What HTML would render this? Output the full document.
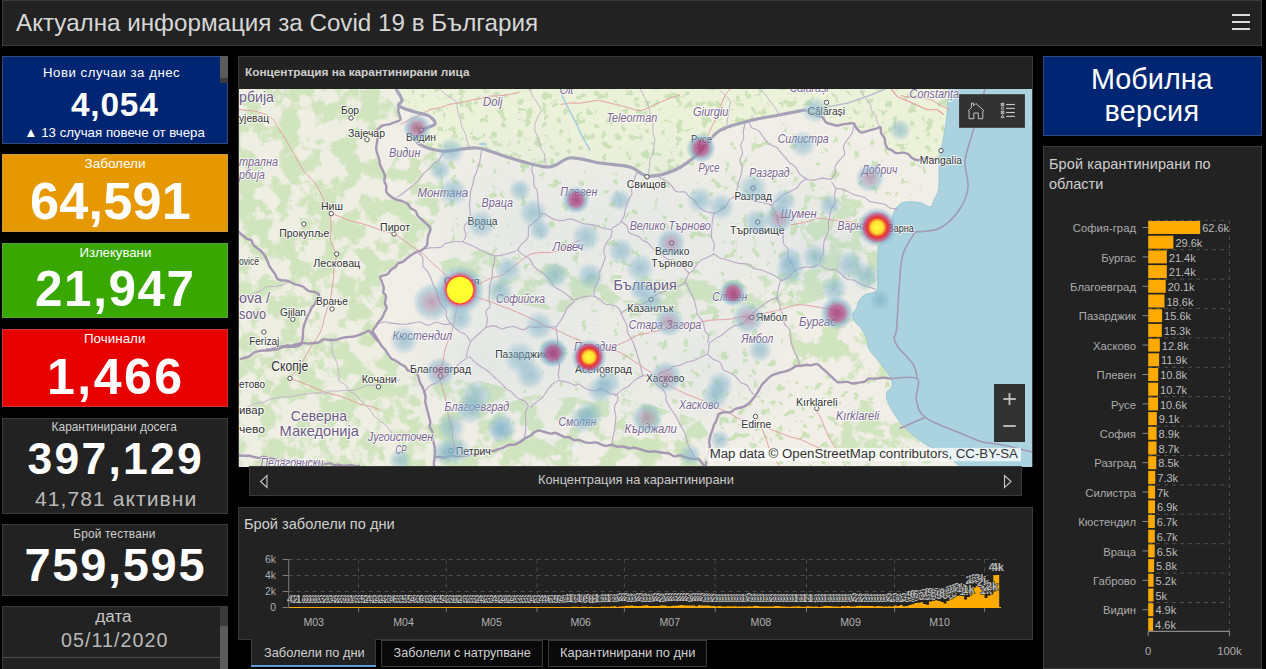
<!DOCTYPE html>
<html><head><meta charset="utf-8">
<style>
*{margin:0;padding:0;box-sizing:border-box}
html,body{width:1266px;height:669px;overflow:hidden;background:#000;font-family:"Liberation Sans",sans-serif}
.a{position:absolute}
.t{position:absolute;white-space:nowrap;line-height:1}
.pnl{position:absolute;background:#222;border:1px solid #3a3a3a}
</style></head><body>
<!-- header -->
<div class="pnl" style="left:2px;top:0;width:1260px;height:46px"></div>
<div class="t" style="left:16px;top:11px;font-size:24.2px;color:#d6d6d6">Актуална информация за Covid 19 в България</div>
<div class="a" style="left:1232px;top:14px;width:18px;height:2px;background:#ddd"></div>
<div class="a" style="left:1232px;top:21px;width:18px;height:2px;background:#ddd"></div>
<div class="a" style="left:1232px;top:28px;width:18px;height:2px;background:#ddd"></div>

<!-- left boxes -->
<div class="a" style="left:2px;top:56px;width:226px;height:88px;background:#002673;box-shadow:inset 0 0 0 1px rgba(140,140,150,0.35)"></div>
<div class="a" style="left:220px;top:56px;width:8px;height:22px;background:#5c5c5c"></div>
<div class="a" style="left:220px;top:78px;width:8px;height:5px;background:#3c3c3c"></div>
<div class="t" style="left:43px;top:65.7px;font-size:13.2px;letter-spacing:0.54px;color:#fff">Нови случаи за днес</div>
<div class="t" style="left:71px;top:88.1px;font-size:33.4px;letter-spacing:0.8px;font-weight:700;color:#fff">4,054</div>
<div class="t" style="left:24.3px;top:126px;font-size:13.3px;color:#fff">▲ 13 случая повече от вчера</div>

<div class="a" style="left:2px;top:154px;width:226px;height:78px;background:#e69800;box-shadow:inset 0 0 0 1px rgba(160,160,160,0.35)"></div>
<div class="t" style="left:84.5px;top:156.5px;font-size:13.5px;color:#fff">Заболели</div>
<div class="t" style="left:30px;top:174.6px;font-size:52.3px;letter-spacing:0.2px;font-weight:700;color:#fff">64,591</div>

<div class="a" style="left:2px;top:243px;width:226px;height:75px;background:#38a800;box-shadow:inset 0 0 0 1px rgba(160,160,160,0.3)"></div>
<div class="t" style="left:79.5px;top:245.5px;font-size:13.2px;color:#fff">Излекувани</div>
<div class="t" style="left:35px;top:264px;font-size:49.4px;letter-spacing:1.6px;font-weight:700;color:#fff">21,947</div>

<div class="a" style="left:2px;top:329px;width:226px;height:78px;background:#e60000;box-shadow:inset 0 0 0 1px rgba(160,160,160,0.3)"></div>
<div class="t" style="left:84px;top:332px;font-size:13.4px;color:#fff">Починали</div>
<div class="t" style="left:47px;top:351.6px;font-size:50px;letter-spacing:2.5px;font-weight:700;color:#fff">1,466</div>

<div class="pnl" style="left:2px;top:418px;width:226px;height:96px"></div>
<div class="t" style="left:51.6px;top:421.5px;font-size:11.9px;color:#cfcfcf">Карантинирани досега</div>
<div class="t" style="left:27.5px;top:436.7px;font-size:44.5px;letter-spacing:2.25px;font-weight:700;color:#fff">397,129</div>
<div class="t" style="left:35px;top:488.4px;font-size:21.1px;letter-spacing:1.05px;color:#b9b9b9">41,781 активни</div>

<div class="pnl" style="left:2px;top:524px;width:226px;height:72px"></div>
<div class="t" style="left:73.2px;top:528.5px;font-size:11.9px;letter-spacing:0.15px;color:#cfcfcf">Брой тествани</div>
<div class="t" style="left:24.5px;top:541.3px;font-size:47px;letter-spacing:1.7px;font-weight:700;color:#fff">759,595</div>

<div class="pnl" style="left:2px;top:606px;width:226px;height:70px"></div>
<div class="a" style="left:3px;top:657px;width:217px;height:1px;background:#4a4a4a"></div>
<div class="a" style="left:220px;top:607px;width:8px;height:20px;background:#3a3a3a"></div>
<div class="a" style="left:220px;top:626px;width:8px;height:43px;background:#5c5c5c"></div>
<div class="t" style="left:95.3px;top:608.2px;font-size:17.1px;color:#c8c8c8">дата</div>
<div class="t" style="left:61px;top:630.5px;font-size:19.7px;letter-spacing:1.04px;color:#b9b9b9">05/11/2020</div>

<!-- map panel -->
<div class="pnl" style="left:238px;top:56px;width:795px;height:411px"></div>
<div class="t" style="left:245px;top:67px;font-size:11.8px;font-weight:700;color:#cfcfcf">Концентрация на карантинирани лица</div>
<div id="map" class="a" style="left:239px;top:89px;width:793px;height:378px;background:#f2efe9;overflow:hidden"><svg width="793" height="378" viewBox="239 89 793 378" style="position:absolute;left:0;top:0">
<defs>
<radialGradient id="hot"><stop offset="0" stop-color="#ffff30"/><stop offset="0.5" stop-color="#ffff30"/><stop offset="0.56" stop-color="#ff3030"/><stop offset="0.6" stop-color="#c85890" stop-opacity="0.8"/><stop offset="0.75" stop-color="#80b4cc" stop-opacity="0.55"/><stop offset="1" stop-color="#88b8d0" stop-opacity="0"/></radialGradient>
<radialGradient id="hot2"><stop offset="0" stop-color="#ffff40"/><stop offset="0.3" stop-color="#ffe030"/><stop offset="0.5" stop-color="#e83030"/><stop offset="0.68" stop-color="#b8508c" stop-opacity="0.8"/><stop offset="0.82" stop-color="#80b4cc" stop-opacity="0.5"/><stop offset="1" stop-color="#88b8d0" stop-opacity="0"/></radialGradient>
<radialGradient id="hot3"><stop offset="0" stop-color="#ffff40"/><stop offset="0.3" stop-color="#ffc820"/><stop offset="0.58" stop-color="#e42a30"/><stop offset="0.8" stop-color="#b8508c" stop-opacity="0.7"/><stop offset="1" stop-color="#88b8d0" stop-opacity="0"/></radialGradient>
<radialGradient id="mid"><stop offset="0" stop-color="#a83a78" stop-opacity="0.9"/><stop offset="0.45" stop-color="#a85088" stop-opacity="0.75"/><stop offset="0.72" stop-color="#7fb0c8" stop-opacity="0.6"/><stop offset="1" stop-color="#88b8d0" stop-opacity="0"/></radialGradient>
<radialGradient id="midb"><stop offset="0" stop-color="#a05a6a" stop-opacity="0.85"/><stop offset="0.45" stop-color="#9a6a98" stop-opacity="0.6"/><stop offset="0.72" stop-color="#7fb0c8" stop-opacity="0.55"/><stop offset="1" stop-color="#88b8d0" stop-opacity="0"/></radialGradient>
<radialGradient id="midl"><stop offset="0" stop-color="#a07098" stop-opacity="0.62"/><stop offset="0.35" stop-color="#9584aa" stop-opacity="0.5"/><stop offset="0.68" stop-color="#80b2ca" stop-opacity="0.45"/><stop offset="1" stop-color="#88b8d0" stop-opacity="0"/></radialGradient>
<radialGradient id="low"><stop offset="0" stop-color="#78acc6" stop-opacity="0.6"/><stop offset="0.55" stop-color="#84b6cc" stop-opacity="0.42"/><stop offset="1" stop-color="#88b8d0" stop-opacity="0"/></radialGradient>
<radialGradient id="haze"><stop offset="0" stop-color="#a6cadb" stop-opacity="0.16"/><stop offset="1" stop-color="#a6cadb" stop-opacity="0"/></radialGradient>
</defs>
<rect x="239" y="89" width="793" height="378" fill="#f1eee7"/>
<polygon points="396.0,89.0 402.0,100.0 399.0,106.0 415.0,112.0 429.0,116.0 435.0,124.0 423.0,130.0 417.0,142.0 441.0,151.0 477.0,148.0 507.0,157.0 548.0,167.0 570.0,158.0 600.0,163.0 630.0,167.0 648.0,176.0 675.0,170.0 698.0,154.0 719.0,131.0 749.0,121.0 779.0,115.0 805.0,110.0 822.0,118.0 832.0,125.7 853.7,123.1 860.4,133.2 880.5,127.3 887.2,148.3 917.3,159.1 940.0,158.0 942.0,150.0 946.0,123.0 949.0,89.0" fill="#ecf1da"/>
<polygon points="239.0,89.0 396.0,89.0 399.0,121.0 378.5,127.0 375.5,148.0 384.5,174.7 387.5,192.6 411.4,207.6 429.3,228.5 426.3,246.4 411.4,255.4 381.5,276.3 387.0,308.0 373.0,330.6 378.5,341.8 395.4,361.5 418.0,375.6 423.5,392.4 429.0,412.0 432.0,437.4 434.7,457.0 434.0,467.0 434.0,467.0 239.0,467.0" fill="#eeeee2"/>
<filter id="fD" filterUnits="userSpaceOnUse" x="239" y="89" width="793" height="378" color-interpolation-filters="sRGB"><feTurbulence type="fractalNoise" baseFrequency="0.05" numOctaves="5" seed="5"/><feColorMatrix type="matrix" values="0 0 0 0 0.815  0 0 0 0 0.894  0 0 0 0 0.745  9 0 0 0 -4.05"/></filter><filter id="fS" filterUnits="userSpaceOnUse" x="239" y="89" width="793" height="378" color-interpolation-filters="sRGB"><feTurbulence type="fractalNoise" baseFrequency="0.12" numOctaves="3" seed="11"/><feColorMatrix type="matrix" values="0 0 0 0 0.80  0 0 0 0 0.886  0 0 0 0 0.72  14 0 0 0 -8.4"/></filter><clipPath id="cD"><polygon points="239.0,89.0 396.0,89.0 399.0,121.0 378.0,127.0 376.0,148.0 385.0,175.0 388.0,193.0 411.0,208.0 429.0,228.0 426.0,246.0 411.0,255.0 381.0,276.0 387.0,308.0 373.0,331.0 378.0,342.0 395.0,362.0 418.0,376.0 424.0,392.0 429.0,412.0 432.0,437.0 435.0,467.0 239.0,467.0"/><polygon points="430.0,385.0 470.0,378.0 520.0,392.0 560.0,398.0 610.0,395.0 650.0,405.0 700.0,420.0 712.0,440.0 705.0,467.0 430.0,467.0"/><polygon points="440.0,262.0 480.0,250.0 540.0,262.0 600.0,275.0 660.0,275.0 720.0,282.0 790.0,272.0 830.0,268.0 860.0,290.0 800.0,305.0 740.0,310.0 680.0,318.0 620.0,312.0 560.0,312.0 500.0,300.0 450.0,295.0"/><polygon points="790.0,325.0 856.0,318.0 875.0,345.0 889.0,378.0 860.0,377.0 836.0,383.0 800.0,365.0 790.0,345.0"/><polygon points="805.0,195.0 860.0,200.0 885.0,240.0 878.0,280.0 860.0,292.0 815.0,265.0 800.0,230.0"/><polygon points="400.0,150.0 440.0,152.0 445.0,200.0 430.0,230.0 411.0,208.0 388.0,193.0 385.0,175.0"/><polygon points="860.0,400.0 892.0,404.0 910.0,432.0 950.0,467.0 850.0,467.0 830.0,440.0"/></clipPath><filter id="fS2" filterUnits="userSpaceOnUse" x="239" y="89" width="793" height="378" color-interpolation-filters="sRGB"><feTurbulence type="fractalNoise" baseFrequency="0.1" numOctaves="3" seed="17"/><feColorMatrix type="matrix" values="0 0 0 0 0.80  0 0 0 0 0.886  0 0 0 0 0.72  14 0 0 0 -9.1"/></filter><clipPath id="cS"><polygon points="396.0,89.0 949.0,89.0 946.0,123.0 940.0,158.0 917.0,158.0 886.0,145.0 880.0,127.0 860.0,128.0 805.0,110.0 779.0,115.0 749.0,121.0 719.0,131.0 698.0,154.0 675.0,170.0 648.0,176.0 630.0,167.0 600.0,163.0 570.0,158.0 548.0,167.0 507.0,157.0 477.0,148.0 441.0,151.0 417.0,142.0 423.0,130.0 435.0,124.0 429.0,116.0 415.0,112.0 399.0,106.0 402.0,100.0 396.0,89.0"/><polygon points="717.0,415.0 765.0,380.0 836.0,383.0 889.0,378.0 892.0,404.0 860.0,400.0 830.0,440.0 850.0,467.0 705.0,467.0"/></clipPath><clipPath id="cS2"><polygon points="441.0,151.0 548.0,167.0 648.0,176.0 698.0,154.0 749.0,121.0 860.0,128.0 886.0,145.0 917.0,158.0 940.0,158.0 930.0,202.0 888.0,228.0 877.0,280.0 856.0,304.0 800.0,305.0 720.0,282.0 600.0,275.0 440.0,262.0 445.0,200.0"/><polygon points="600.0,312.0 800.0,305.0 856.0,318.0 800.0,365.0 765.0,380.0 717.0,415.0 650.0,405.0 600.0,395.0 560.0,398.0 520.0,392.0 545.0,340.0"/></clipPath><g clip-path="url(#cS)"><rect x="239" y="89" width="793" height="378" filter="url(#fS)"/></g><g clip-path="url(#cS2)"><rect x="239" y="89" width="793" height="378" filter="url(#fS2)"/></g><g clip-path="url(#cD)"><rect x="239" y="89" width="793" height="378" filter="url(#fD)"/></g>
<circle cx="520" cy="230" r="120" fill="url(#haze)"/>
<circle cx="650" cy="230" r="110" fill="url(#haze)"/>
<circle cx="780" cy="230" r="100" fill="url(#haze)"/>
<circle cx="560" cy="360" r="110" fill="url(#haze)"/>
<circle cx="700" cy="360" r="100" fill="url(#haze)"/>
<circle cx="470" cy="360" r="80" fill="url(#haze)"/>
<circle cx="840" cy="260" r="60" fill="url(#haze)"/>
<path d="M949.0,89.0 C948.5,94.7 947.5,111.5 946.0,123.0 C944.5,134.5 941.2,148.3 940.0,158.0 C938.8,167.7 939.3,175.7 939.0,181.0 C938.7,186.3 939.2,186.8 938.4,190.0 C937.6,193.2 935.4,197.2 934.0,200.0 C932.6,202.8 932.4,206.4 930.0,206.8 C927.6,207.2 924.1,203.3 919.6,202.6 C915.1,201.9 907.0,201.2 902.8,202.6 C898.6,204.0 896.4,207.9 894.5,211.0 C892.6,214.1 893.0,216.5 891.3,221.4 C889.5,226.3 886.1,236.1 884.0,240.3 C881.9,244.5 879.8,243.4 878.7,246.5 C877.7,249.6 877.9,254.4 877.7,259.0 C877.5,263.6 877.9,268.6 877.7,273.8 C877.5,279.1 878.7,287.0 876.6,290.5 C874.5,294.0 868.0,292.9 865.0,294.7 C862.0,296.4 860.2,298.9 858.8,301.0 C857.4,303.1 857.8,304.9 856.8,307.3 C855.8,309.8 852.6,312.9 852.6,315.7 C852.6,318.5 855.6,322.2 856.8,324.0 C858.0,325.8 858.4,324.3 860.0,326.6 C861.6,328.9 865.0,334.0 866.5,337.7 C868.0,341.4 866.9,345.1 868.8,348.8 C870.6,352.5 874.5,355.8 877.6,359.8 C880.7,363.8 885.4,369.9 887.6,373.0 C889.8,376.1 890.2,376.4 890.9,378.6 C891.6,380.8 892.7,384.0 892.0,386.4 C891.3,388.8 887.0,390.1 886.5,393.0 C886.0,395.9 886.5,399.2 888.7,404.0 C890.9,408.8 895.7,416.6 899.7,421.8 C903.8,427.0 908.2,431.0 913.0,435.0 C917.8,439.0 923.3,443.1 928.5,446.0 C933.7,448.9 938.8,449.2 944.0,452.7 C949.2,456.2 957.3,464.6 960.0,467.0 L1032,467 L1032,89 Z" fill="#aad3df"/>
<path d="M949.0,89.0 C948.5,94.7 947.5,111.5 946.0,123.0 C944.5,134.5 941.2,148.3 940.0,158.0 C938.8,167.7 939.3,175.7 939.0,181.0 C938.7,186.3 939.2,186.8 938.4,190.0 C937.6,193.2 935.4,197.2 934.0,200.0 C932.6,202.8 932.4,206.4 930.0,206.8 C927.6,207.2 924.1,203.3 919.6,202.6 C915.1,201.9 907.0,201.2 902.8,202.6 C898.6,204.0 896.4,207.9 894.5,211.0 C892.6,214.1 893.0,216.5 891.3,221.4 C889.5,226.3 886.1,236.1 884.0,240.3 C881.9,244.5 879.8,243.4 878.7,246.5 C877.7,249.6 877.9,254.4 877.7,259.0 C877.5,263.6 877.9,268.6 877.7,273.8 C877.5,279.1 878.7,287.0 876.6,290.5 C874.5,294.0 868.0,292.9 865.0,294.7 C862.0,296.4 860.2,298.9 858.8,301.0 C857.4,303.1 857.8,304.9 856.8,307.3 C855.8,309.8 852.6,312.9 852.6,315.7 C852.6,318.5 855.6,322.2 856.8,324.0 C858.0,325.8 858.4,324.3 860.0,326.6 C861.6,328.9 865.0,334.0 866.5,337.7 C868.0,341.4 866.9,345.1 868.8,348.8 C870.6,352.5 874.5,355.8 877.6,359.8 C880.7,363.8 885.4,369.9 887.6,373.0 C889.8,376.1 890.2,376.4 890.9,378.6 C891.6,380.8 892.7,384.0 892.0,386.4 C891.3,388.8 887.0,390.1 886.5,393.0 C886.0,395.9 886.5,399.2 888.7,404.0 C890.9,408.8 895.7,416.6 899.7,421.8 C903.8,427.0 908.2,431.0 913.0,435.0 C917.8,439.0 923.3,443.1 928.5,446.0 C933.7,448.9 938.8,449.2 944.0,452.7 C949.2,456.2 957.3,464.6 960.0,467.0" fill="none" stroke="#9cc7d6" stroke-width="1"/>
<path d="M331.2,213.2 C332.7,213.8 337.1,215.6 340.3,216.9 C343.6,218.2 347.3,219.9 350.7,220.9 C354.1,222.0 357.2,222.4 360.6,223.3 C364.0,224.3 367.6,225.4 371.2,226.6 C374.8,227.8 378.5,229.5 382.2,230.7 C385.9,231.8 389.5,231.8 393.2,233.5 C397.0,235.3 401.2,238.6 404.7,241.1 C408.3,243.5 411.4,245.9 414.6,248.1 C417.7,250.4 420.9,252.1 423.8,254.5 C426.8,257.0 429.5,260.5 432.2,263.0 C434.8,265.5 436.7,266.5 439.7,269.4 C442.8,272.4 447.0,277.0 450.2,280.7 C453.4,284.5 457.5,290.1 459.0,292.0" fill="none" stroke="#e4a2a2" stroke-width="1"/>
<path d="M330.3,213.4 C330.5,215.7 331.0,222.7 331.1,227.2 C331.1,231.7 329.7,235.8 330.5,240.4 C331.3,245.0 335.4,250.6 336.1,254.8 C336.7,259.0 334.7,261.8 334.3,265.6 C333.9,269.3 333.9,273.3 333.5,277.2 C333.2,281.0 332.6,284.9 332.1,288.6 C331.5,292.3 331.2,295.8 330.3,299.3 C329.5,302.8 328.0,306.3 326.9,309.7 C325.8,313.0 324.9,316.2 324.0,319.6 C323.1,322.9 322.6,326.5 321.4,329.6 C320.1,332.8 318.5,335.6 316.7,338.5 C315.0,341.4 312.7,344.0 310.8,347.0 C308.9,350.1 306.9,353.9 305.1,356.9 C303.4,360.0 302.8,361.7 300.2,365.2 C297.7,368.7 291.7,375.9 290.0,378.0" fill="none" stroke="#e4a2a2" stroke-width="1"/>
<path d="M289.5,378.4 C291.1,378.9 295.9,380.5 299.5,381.8 C303.0,383.1 307.3,384.8 310.8,386.2 C314.2,387.6 316.8,389.0 320.1,390.3 C323.4,391.6 327.3,392.8 330.5,393.8 C333.8,394.7 336.4,394.9 339.6,395.9 C342.8,396.9 346.4,398.3 349.7,399.6 C353.0,401.0 356.1,402.9 359.5,404.0 C363.0,405.2 367.2,405.4 370.6,406.4 C374.0,407.4 378.4,409.4 380.0,410.0" fill="none" stroke="#e4a2a2" stroke-width="1"/>
<path d="M459.2,291.8 C461.0,292.4 466.6,294.1 469.9,295.2 C473.2,296.2 475.8,297.1 479.1,298.1 C482.4,299.1 486.3,300.1 489.8,301.4 C493.4,302.6 496.6,304.3 500.1,305.6 C503.7,307.0 507.2,308.0 511.1,309.6 C514.9,311.1 519.6,313.4 523.3,315.0 C527.0,316.6 529.6,317.6 533.1,319.3 C536.6,321.0 540.5,323.4 544.4,325.2 C548.3,327.0 552.8,328.3 556.5,329.9 C560.1,331.5 562.6,333.1 566.3,334.8 C570.0,336.5 574.9,338.3 578.8,340.0 C582.7,341.8 586.5,344.3 589.8,345.6 C593.0,346.9 595.2,347.0 598.6,347.7 C601.9,348.4 606.4,349.0 610.0,349.7 C613.5,350.5 616.0,350.5 619.6,352.2 C623.3,353.9 627.7,357.1 631.9,359.9 C636.1,362.6 641.0,366.1 644.9,368.7 C648.9,371.3 652.3,373.2 655.6,375.6 C658.9,378.1 661.4,381.1 665.0,383.5 C668.6,385.9 673.5,388.0 677.3,389.9 C681.2,391.8 684.2,393.3 688.0,394.9 C691.8,396.5 696.4,397.8 700.2,399.4 C703.9,401.1 707.0,403.0 710.4,404.6 C713.8,406.2 717.3,407.6 720.4,409.0 C723.6,410.5 726.1,411.6 729.2,413.2 C732.3,414.8 735.7,417.2 739.2,418.7 C742.8,420.2 747.2,421.1 750.6,422.0 C754.0,423.0 756.4,423.1 759.7,424.3 C763.0,425.5 767.3,428.1 770.6,429.5 C773.9,430.8 776.2,431.3 779.3,432.5 C782.5,433.7 785.8,435.5 789.3,436.7 C792.8,437.8 797.0,438.2 800.4,439.4 C803.9,440.6 806.8,442.4 810.0,443.8 C813.2,445.3 816.3,446.9 819.6,448.1 C822.9,449.3 826.5,449.6 829.9,450.8 C833.3,451.9 838.3,454.3 840.0,455.0" fill="none" stroke="#e4a2a2" stroke-width="1"/>
<path d="M600.1,352.4 C601.6,351.5 606.1,348.9 609.5,347.4 C613.0,346.0 617.4,345.1 620.8,343.7 C624.2,342.4 626.8,340.8 629.9,339.3 C633.0,337.7 636.1,335.6 639.4,334.6 C642.7,333.5 646.4,333.7 649.7,333.0 C653.1,332.3 656.3,330.9 659.6,330.2 C662.8,329.5 666.0,329.2 669.3,328.7 C672.6,328.2 676.0,327.9 679.6,327.0 C683.1,326.1 687.2,324.3 690.6,323.5 C693.9,322.7 696.4,322.8 699.6,322.3 C702.8,321.7 706.3,320.6 709.9,320.2 C713.6,319.8 718.0,319.9 721.5,319.7 C725.0,319.5 727.7,319.4 731.2,318.9 C734.6,318.4 738.7,317.2 742.1,316.7 C745.5,316.2 747.7,316.5 751.4,315.9 C755.0,315.3 759.7,314.0 763.9,313.2 C768.0,312.3 772.2,311.8 776.4,310.8 C780.5,309.8 784.9,308.1 788.8,307.1 C792.7,306.1 795.8,304.9 799.8,304.7 C803.9,304.6 808.9,305.7 812.9,306.3 C817.0,306.8 820.2,307.6 824.2,308.3 C828.2,308.9 834.9,309.7 837.0,310.0" fill="none" stroke="#e4a2a2" stroke-width="1"/>
<path d="M458.9,291.6 C460.5,291.1 465.4,289.7 468.8,288.4 C472.3,287.2 475.9,285.7 479.4,284.1 C482.9,282.4 486.3,280.0 489.8,278.5 C493.4,277.1 497.3,277.1 500.8,275.5 C504.3,274.0 507.5,271.4 510.8,269.0 C514.0,266.6 517.4,263.5 520.6,261.1 C523.8,258.7 526.8,256.0 530.0,254.5 C533.2,253.1 536.5,253.0 539.8,252.6 C543.1,252.3 546.5,252.8 549.8,252.4 C553.1,252.1 556.3,251.7 559.6,250.5 C563.0,249.2 566.5,246.6 569.9,244.9 C573.3,243.1 578.3,240.8 580.0,240.0" fill="none" stroke="#e4a2a2" stroke-width="1"/>
<path d="M876.7,226.8 C874.5,226.4 867.6,225.2 863.1,224.3 C858.5,223.5 853.2,222.3 849.4,221.7 C845.7,221.1 844.0,221.1 840.7,220.8 C837.5,220.5 833.6,220.2 830.1,219.7 C826.5,219.3 822.6,217.9 819.3,218.1 C815.9,218.3 813.3,220.0 810.0,220.9 C806.7,221.8 802.8,222.7 799.5,223.4 C796.1,224.1 791.6,224.7 790.0,225.0" fill="none" stroke="#e4a2a2" stroke-width="1"/>
<path d="M458.3,291.5 C458.1,294.0 457.8,301.6 457.2,306.3 C456.5,310.9 455.4,315.5 454.6,319.4 C453.8,323.3 453.3,326.1 452.3,329.6 C451.3,333.1 449.7,336.8 448.5,340.2 C447.2,343.6 445.9,346.2 444.9,350.1 C443.9,354.1 443.4,359.3 442.5,363.7 C441.6,368.1 439.6,372.5 439.5,376.3 C439.5,380.2 441.1,383.3 442.1,386.8 C443.0,390.4 444.4,393.9 445.3,397.7 C446.1,401.4 446.5,405.7 447.2,409.4 C447.9,413.1 448.4,416.4 449.3,419.9 C450.2,423.5 451.9,427.5 452.5,430.8 C453.0,434.1 452.2,436.3 452.7,439.5 C453.1,442.7 454.6,448.3 455.0,450.0" fill="none" stroke="#e4a2a2" stroke-width="1"/>
<path d="M815.6,408.7 C816.6,410.5 819.7,415.9 821.3,419.3 C822.9,422.6 823.6,425.3 825.1,428.8 C826.7,432.3 828.4,436.7 830.5,440.3 C832.6,444.0 835.3,447.5 837.7,450.8 C840.1,454.1 843.8,458.5 845.0,460.0" fill="none" stroke="#e4a2a2" stroke-width="1"/>
<path d="M760.2,424.2 C761.1,426.4 763.8,432.8 765.5,437.2 C767.2,441.6 767.8,445.7 770.3,450.7 C772.7,455.7 778.4,464.3 780.0,467.0" fill="none" stroke="#e4a2a2" stroke-width="1"/>
<path d="M699.4,153.4 C700.2,151.6 702.7,146.4 704.4,142.8 C706.1,139.1 707.8,135.4 709.6,131.5 C711.5,127.6 713.6,123.6 715.3,119.5 C717.1,115.5 718.6,111.1 720.2,107.1 C721.8,103.1 723.4,98.7 725.0,95.6 C726.6,92.6 729.2,90.1 730.0,89.0" fill="none" stroke="#e4a2a2" stroke-width="1"/>
<path d="M400.6,124.3 C402.1,123.6 406.8,121.1 409.9,119.6 C413.0,118.2 415.8,117.1 419.2,115.4 C422.6,113.8 426.7,110.9 430.2,109.6 C433.7,108.3 437.1,108.5 440.4,107.6 C443.7,106.7 446.7,105.0 449.9,104.2 C453.0,103.5 455.9,103.8 459.3,103.1 C462.8,102.4 467.1,100.8 470.6,100.1 C474.2,99.3 477.4,99.2 480.5,98.5 C483.7,97.9 486.2,96.7 489.4,96.2 C492.6,95.8 496.2,96.2 499.7,95.8 C503.2,95.5 507.1,94.8 510.5,94.2 C513.9,93.5 518.4,92.4 520.0,92.0" fill="none" stroke="#e4a2a2" stroke-width="1"/>
<path d="M560.6,104.5 C562.1,104.3 566.3,103.4 569.6,103.1 C572.9,102.9 577.1,103.4 580.4,103.1 C583.8,102.8 586.7,101.8 589.9,101.4 C593.0,101.0 596.0,100.4 599.4,100.7 C602.9,101.0 607.1,102.4 610.6,103.3 C614.1,104.1 617.4,104.8 620.5,105.6 C623.6,106.4 626.0,107.0 629.2,107.9 C632.4,108.7 636.2,110.9 639.7,110.7 C643.3,110.5 647.0,108.3 650.5,106.8 C653.9,105.4 657.2,103.6 660.5,102.1 C663.8,100.7 667.2,99.3 670.5,98.1 C673.7,96.9 678.4,95.5 680.0,95.0" fill="none" stroke="#e4a2a2" stroke-width="1"/>
<path d="M900.6,95.6 C902.1,95.8 906.3,96.8 909.6,97.2 C912.8,97.6 916.5,97.6 919.9,98.0 C923.4,98.4 927.3,98.5 930.5,99.6 C933.7,100.6 936.0,102.8 939.2,104.5 C942.5,106.2 948.2,109.1 950.0,110.0" fill="none" stroke="#e4a2a2" stroke-width="1"/>
<path d="M238.7,109.6 C241.7,109.9 251.3,110.3 256.7,111.6 C262.2,113.0 267.6,114.9 271.2,117.8 C274.9,120.7 276.4,125.5 278.8,129.1 C281.2,132.6 283.5,135.7 285.7,139.4 C287.9,143.0 290.1,147.1 292.3,151.0 C294.4,154.9 296.8,159.3 298.7,162.6 C300.7,166.0 301.9,168.4 304.0,171.2 C306.2,174.0 309.3,176.6 311.7,179.4 C314.1,182.2 316.1,184.4 318.2,188.0 C320.3,191.6 322.2,196.8 324.3,201.1 C326.5,205.5 329.9,211.9 331.0,214.0" fill="none" stroke="#e4a2a2" stroke-width="1"/>
<path d="M440.4,89.5 C441.5,90.5 444.4,93.7 446.8,95.5 C449.3,97.4 453.4,98.6 455.1,100.5 C456.8,102.5 456.8,105.1 457.2,107.1 C457.7,109.0 457.5,110.2 458.0,112.3 C458.5,114.4 459.7,117.0 460.4,119.6 C461.1,122.2 461.2,125.5 462.1,127.8 C462.9,130.2 464.7,131.4 465.5,133.5 C466.4,135.7 466.3,138.4 467.0,140.8 C467.8,143.2 469.5,146.8 470.0,148.0" fill="none" stroke="#c4b4cc" stroke-width="1"/>
<path d="M529.8,88.5 C530.2,89.7 531.1,93.3 532.4,95.8 C533.8,98.3 536.3,101.0 537.7,103.4 C539.1,105.8 540.9,108.1 541.0,110.3 C541.0,112.5 538.8,114.7 537.9,116.8 C536.9,118.9 536.0,120.6 535.5,122.8 C535.0,125.1 534.5,128.0 534.8,130.2 C535.2,132.4 536.8,134.2 537.5,136.1 C538.3,138.0 538.5,139.4 539.2,141.6 C539.8,143.9 540.6,147.4 541.4,149.5 C542.3,151.5 543.8,152.0 544.4,153.9 C544.9,155.8 544.2,158.7 544.8,160.9 C545.4,163.1 547.5,166.0 548.0,167.0" fill="none" stroke="#c4b4cc" stroke-width="1"/>
<path d="M640.3,88.6 C640.9,89.9 643.0,94.3 644.1,96.6 C645.2,98.9 646.2,100.3 647.1,102.3 C647.9,104.4 648.7,106.6 649.3,108.9 C649.8,111.1 649.8,113.9 650.4,115.9 C651.0,118.0 652.4,118.9 652.8,121.0 C653.2,123.0 652.7,126.1 652.8,128.3 C652.9,130.6 652.9,132.6 653.3,134.5 C653.6,136.3 654.8,137.7 655.0,139.4 C655.1,141.1 654.5,142.6 654.2,144.8 C653.9,147.0 653.9,150.5 653.3,152.6 C652.7,154.8 651.2,155.7 650.6,157.8 C649.9,159.9 649.8,163.2 649.6,165.1 C649.3,166.9 649.5,167.1 649.2,168.9 C649.0,170.7 648.2,174.8 648.0,176.0" fill="none" stroke="#c4b4cc" stroke-width="1"/>
<path d="M719.4,89.8 C720.3,90.7 723.1,93.3 724.9,95.2 C726.7,97.1 729.7,99.2 730.4,101.2 C731.1,103.2 729.5,105.4 729.2,107.3 C729.0,109.2 729.2,110.8 728.9,112.7 C728.7,114.6 727.9,116.6 727.5,118.6 C727.2,120.7 727.2,122.9 726.8,124.9 C726.4,127.0 725.3,130.0 725.0,131.0" fill="none" stroke="#c4b4cc" stroke-width="1"/>
<path d="M761.0,89.6 C761.6,90.3 763.5,92.1 764.9,93.9 C766.3,95.7 767.7,98.1 769.4,100.3 C771.1,102.6 773.5,105.1 775.1,107.6 C776.7,110.0 778.4,113.8 779.0,115.0" fill="none" stroke="#c4b4cc" stroke-width="1"/>
<path d="M860.3,88.5 C860.6,89.4 861.4,92.0 862.3,93.8 C863.3,95.6 864.8,97.5 866.1,99.2 C867.4,101.0 869.1,102.2 870.1,104.1 C871.1,106.1 871.0,109.2 871.9,111.0 C872.8,112.8 874.6,113.2 875.5,115.0 C876.4,116.7 876.5,119.6 877.3,121.6 C878.0,123.6 879.5,126.1 880.0,127.0" fill="none" stroke="#c4b4cc" stroke-width="1"/>
<path d="M238.8,299.3 C240.0,299.0 243.4,298.6 245.8,297.6 C248.2,296.7 250.7,295.0 253.2,293.8 C255.7,292.6 258.6,291.8 260.9,290.6 C263.1,289.5 264.6,287.5 266.7,286.8 C268.8,286.1 271.1,286.9 273.6,286.6 C276.2,286.3 279.5,285.9 281.8,285.1 C284.2,284.3 287.0,282.5 288.0,282.0" fill="none" stroke="#c4b4cc" stroke-width="1"/>
<path d="M238.8,410.6 C239.9,410.2 243.3,409.1 245.3,408.2 C247.3,407.4 248.7,406.2 250.7,405.3 C252.8,404.4 255.3,403.4 257.4,402.9 C259.6,402.4 261.4,403.0 263.4,402.4 C265.5,401.8 267.7,399.9 269.8,399.2 C271.9,398.5 273.8,398.5 275.9,398.1 C278.0,397.7 280.3,397.0 282.3,396.9 C284.3,396.7 286.0,397.2 287.7,397.2 C289.5,397.1 291.0,396.7 292.9,396.3 C294.8,396.0 297.1,395.3 299.1,394.9 C301.2,394.5 303.1,394.3 305.2,394.1 C307.3,393.8 309.4,393.5 311.8,393.3 C314.2,393.1 317.1,392.8 319.4,392.8 C321.7,392.8 323.7,393.6 325.6,393.3 C327.5,393.0 328.9,391.2 330.7,390.9 C332.4,390.5 334.0,391.4 336.3,391.3 C338.7,391.2 342.6,390.4 344.9,390.3 C347.3,390.2 348.4,390.8 350.4,390.7 C352.3,390.5 354.4,390.0 356.6,389.4 C358.8,388.7 361.7,387.4 363.6,386.8 C365.4,386.1 365.8,385.6 367.6,385.4 C369.4,385.2 371.8,385.8 374.1,385.4 C376.4,385.0 379.1,383.5 381.4,383.1 C383.7,382.7 386.1,383.4 388.0,383.1 C389.9,382.9 390.9,382.0 393.0,381.5 C395.0,381.0 398.8,380.3 400.0,380.0" fill="none" stroke="#c4b4cc" stroke-width="1"/>
<path d="M330.6,338.1 C330.9,339.4 332.0,344.1 332.2,346.0 C332.4,347.9 331.6,347.7 331.9,349.6 C332.2,351.4 333.0,354.9 333.8,357.0 C334.7,359.1 336.2,360.5 336.8,362.2 C337.5,363.9 337.3,365.2 337.7,367.3 C338.0,369.3 338.8,372.2 339.0,374.4 C339.3,376.7 337.9,378.9 339.0,380.7 C340.2,382.5 344.2,383.5 345.8,385.2 C347.5,387.0 347.5,389.6 349.1,391.2 C350.7,392.7 353.9,393.2 355.7,394.6 C357.5,396.1 358.3,398.0 359.8,399.7 C361.4,401.4 363.2,402.8 365.0,404.6 C366.8,406.5 369.3,408.9 370.8,410.8 C372.3,412.7 372.5,414.4 374.1,416.1 C375.6,417.8 378.4,419.3 380.3,420.8 C382.2,422.2 383.8,423.1 385.5,424.8 C387.2,426.6 389.1,429.3 390.6,431.1 C392.1,432.9 392.9,434.3 394.4,435.7 C396.0,437.2 398.1,439.3 400.1,440.0 C402.1,440.7 404.2,440.0 406.2,440.0 C408.3,439.9 410.0,440.1 412.2,439.6 C414.5,439.2 417.6,437.7 420.0,437.2 C422.4,436.8 424.5,437.0 426.5,437.0 C428.5,437.0 431.1,437.0 432.0,437.0" fill="none" stroke="#c4b4cc" stroke-width="1"/>
<path d="M423.6,393.7 C424.4,392.5 426.6,388.4 428.7,386.6 C430.9,384.8 434.7,383.7 436.4,382.7 C438.1,381.8 437.7,381.9 439.1,380.9 C440.6,379.9 443.1,378.6 445.3,376.7 C447.5,374.8 450.8,371.0 452.4,369.5 C454.0,368.1 453.5,369.2 454.9,368.0 C456.3,366.8 458.6,364.3 460.8,362.4 C463.1,360.6 467.0,357.9 468.2,356.9" fill="none" stroke="#bba9c6" stroke-width="1.1"/><path d="M523.2,441.5 C523.6,440.0 525.0,435.2 525.4,432.4 C525.8,429.5 525.8,427.6 525.8,424.4 C525.8,421.2 524.9,416.3 525.4,413.2 C525.8,410.1 527.9,407.0 528.5,405.8" fill="none" stroke="#bba9c6" stroke-width="1.1"/><path d="M469.1,356.1 C469.9,356.9 472.4,359.7 474.1,361.3 C475.8,362.8 477.4,364.1 479.3,365.5 C481.3,366.9 483.8,368.2 485.7,369.5 C487.7,370.9 489.6,372.4 491.0,373.7 C492.5,375.0 493.1,376.1 494.5,377.5 C496.0,378.8 497.7,380.0 499.7,381.9 C501.8,383.9 504.9,387.6 506.7,389.2 C508.5,390.7 508.9,389.8 510.6,391.2 C512.4,392.7 515.0,396.2 517.4,397.9 C519.8,399.6 523.2,400.2 525.1,401.5 C526.9,402.8 527.9,405.1 528.5,405.8" fill="none" stroke="#bba9c6" stroke-width="1.1"/><path d="M694.7,457.0 C694.1,456.1 692.3,453.5 691.2,451.3 C690.0,449.1 688.7,446.1 688.0,444.1 C687.2,442.0 686.8,440.6 686.4,438.9 C685.9,437.2 686.1,436.1 685.2,433.9 C684.2,431.7 681.9,427.9 680.8,425.7 C679.7,423.6 679.3,422.8 678.4,421.1 C677.5,419.3 676.6,417.3 675.3,415.1 C674.0,413.0 671.9,410.7 670.4,408.3 C668.8,405.8 666.7,402.3 666.0,400.3 C665.3,398.2 666.8,397.7 666.2,395.9 C665.6,394.0 664.2,391.2 662.5,389.2 C660.8,387.3 657.4,386.0 656.1,384.0 C654.8,381.9 655.0,378.3 654.8,377.1" fill="none" stroke="#bba9c6" stroke-width="1.1"/><path d="M753.4,394.5 C752.9,393.8 751.4,392.1 750.3,390.5 C749.2,388.9 748.5,386.4 746.9,385.0 C745.2,383.7 742.5,384.0 740.5,382.5 C738.6,381.0 737.3,377.8 735.3,376.2 C733.4,374.5 730.9,373.6 728.8,372.5 C726.8,371.4 724.6,371.3 723.2,369.6 C721.7,368.0 721.9,364.3 720.3,362.5 C718.6,360.8 715.5,360.6 713.3,359.2 C711.2,357.8 708.5,354.9 707.5,354.1" fill="none" stroke="#bba9c6" stroke-width="1.1"/><path d="M655.9,379.1 C656.6,378.1 658.0,374.5 660.1,373.0 C662.2,371.4 666.5,370.9 668.7,369.8 C670.9,368.8 671.4,367.3 673.1,366.6 C674.8,365.9 676.5,366.2 679.0,365.4 C681.5,364.6 685.8,362.6 688.1,361.8 C690.5,361.0 690.9,361.6 693.1,360.7 C695.4,359.9 699.4,357.9 701.8,356.7 C704.2,355.6 706.5,354.5 707.5,354.1" fill="none" stroke="#bba9c6" stroke-width="1.1"/><path d="M799.9,367.2 C799.6,365.8 798.9,361.3 798.1,359.1 C797.4,356.8 796.3,356.0 795.3,353.6 C794.3,351.3 792.8,347.4 792.1,345.2 C791.3,342.9 791.3,342.6 790.8,340.0 C790.4,337.4 790.5,332.2 789.4,329.5 C788.3,326.8 785.1,325.7 784.3,323.8 C783.5,321.9 785.3,320.5 784.6,318.1 C784.0,315.7 781.1,311.6 780.4,309.4 C779.6,307.2 780.5,307.1 779.9,305.2 C779.3,303.2 777.4,298.8 776.8,297.5" fill="none" stroke="#bba9c6" stroke-width="1.1"/><path d="M778.8,297.5 C777.4,297.9 773.4,298.5 770.7,299.8 C768.0,301.1 764.7,304.0 762.5,305.5 C760.4,307.0 759.6,307.1 757.6,308.8 C755.6,310.6 752.1,314.5 750.5,316.1 C748.8,317.7 749.0,317.1 747.6,318.6 C746.2,320.0 744.1,323.4 742.0,324.6 C739.8,325.7 737.3,324.3 734.6,325.5 C731.9,326.7 727.9,330.1 725.7,331.8 C723.5,333.5 722.8,334.5 721.4,335.5 C720.0,336.4 719.3,336.3 717.2,337.6 C715.2,338.8 710.6,342.2 709.3,343.1" fill="none" stroke="#bba9c6" stroke-width="1.1"/><path d="M707.9,354.7 L709.3,343.1" fill="none" stroke="#bba9c6" stroke-width="1.1"/><path d="M819.8,263.4 C819.9,262.5 820.0,259.3 820.6,257.5 C821.2,255.8 823.0,254.9 823.5,252.9 C824.0,250.8 823.3,247.5 823.5,245.2 C823.7,242.9 823.9,241.8 824.7,239.3 C825.6,236.9 827.9,233.4 828.5,230.6 C829.1,227.8 828.3,224.6 828.4,222.6 C828.5,220.6 828.8,220.7 829.3,218.5 C829.7,216.4 830.1,212.1 831.1,209.6 C832.1,207.0 834.5,205.6 835.1,203.2 C835.7,200.8 834.5,197.6 834.6,195.2 C834.8,192.7 835.7,189.7 835.9,188.6" fill="none" stroke="#bba9c6" stroke-width="1.1"/><path d="M818.5,264.6 C817.5,265.1 815.0,267.0 812.6,267.4 C810.3,267.8 807.3,266.7 804.3,267.1 C801.4,267.5 796.5,269.5 794.9,270.0" fill="none" stroke="#bba9c6" stroke-width="1.1"/><path d="M795.1,271.9 C794.6,270.6 793.3,266.5 792.2,264.3 C791.1,262.1 789.1,261.5 788.4,258.9 C787.7,256.4 788.9,251.6 788.1,249.1 C787.4,246.6 784.6,246.2 783.7,243.9 C782.9,241.6 783.3,237.2 783.1,235.3 C782.9,233.4 783.5,234.5 782.6,232.3 C781.7,230.2 778.8,224.8 777.9,222.3 C776.9,219.8 777.7,219.3 777.1,217.4 C776.5,215.4 775.2,213.0 774.2,210.8 C773.1,208.6 771.4,205.3 770.8,204.2" fill="none" stroke="#bba9c6" stroke-width="1.1"/><path d="M769.8,205.7 C771.3,204.5 776.7,200.5 779.0,198.7 C781.2,196.9 781.1,196.2 783.1,194.9 C785.1,193.7 788.5,192.2 790.8,191.1 C793.0,190.0 795.1,189.5 796.6,188.3 C798.2,187.0 798.3,185.3 800.0,183.6 C801.7,181.9 805.9,178.9 807.0,177.9" fill="none" stroke="#bba9c6" stroke-width="1.1"/><path d="M806.7,179.8 C808.1,179.9 812.5,180.2 815.1,179.9 C817.7,179.6 819.4,178.2 822.1,178.1 C824.8,178.1 829.6,179.3 831.1,179.5" fill="none" stroke="#bba9c6" stroke-width="1.1"/><path d="M831.5,181.7 L835.9,188.6" fill="none" stroke="#bba9c6" stroke-width="1.1"/><path d="M875.7,289.2 C874.6,288.9 871.2,287.7 869.0,286.9 C866.7,286.1 864.4,285.7 862.0,284.6 C859.6,283.5 857.2,281.4 854.6,280.4 C852.0,279.5 848.7,280.0 846.4,278.9 C844.2,277.8 843.0,275.2 841.1,273.7 C839.2,272.1 837.2,270.3 835.0,269.6 C832.8,268.9 830.4,270.1 827.9,269.3 C825.4,268.6 821.2,265.9 819.8,265.2" fill="none" stroke="#bba9c6" stroke-width="1.1"/><path d="M897.7,208.6 C896.5,208.6 892.5,208.9 890.4,208.2 C888.2,207.6 887.7,205.5 885.0,204.5 C882.3,203.5 876.7,202.8 874.2,202.3 C871.6,201.8 871.5,202.4 869.9,201.6 C868.3,200.8 866.7,198.5 864.4,197.5 C862.1,196.4 858.5,196.0 856.2,195.2 C853.8,194.5 852.5,193.7 850.3,192.8 C848.2,191.8 845.7,190.1 843.3,189.4 C840.9,188.7 837.1,188.7 835.9,188.6" fill="none" stroke="#bba9c6" stroke-width="1.1"/><path d="M776.7,299.6 C777.0,297.9 777.5,292.7 778.2,289.3 C778.9,286.0 780.5,281.1 780.9,279.4" fill="none" stroke="#bba9c6" stroke-width="1.1"/><path d="M781.6,281.0 C782.9,280.2 787.2,278.1 789.5,276.3 C791.7,274.5 794.0,271.0 794.9,270.0" fill="none" stroke="#bba9c6" stroke-width="1.1"/><path d="M853.9,123.4 C853.6,124.8 853.1,130.1 852.5,132.2 C851.8,134.3 851.7,133.8 850.2,136.0 C848.8,138.2 844.7,142.5 843.8,145.5 C842.8,148.5 845.1,151.9 844.6,154.0 C844.1,156.2 842.5,156.4 840.9,158.5 C839.3,160.5 836.0,164.0 835.2,166.3 C834.3,168.6 836.3,170.2 835.6,172.4 C835.0,174.6 831.8,178.3 831.1,179.5" fill="none" stroke="#bba9c6" stroke-width="1.1"/><path d="M807.9,179.7 C806.5,178.8 801.8,176.2 799.7,174.1 C797.7,172.0 797.2,169.0 795.5,167.1 C793.8,165.1 791.1,164.0 789.5,162.6 C788.0,161.2 787.8,160.6 786.1,158.6 C784.3,156.5 780.6,152.1 779.0,150.3 C777.5,148.4 778.5,148.6 776.8,147.5 C775.1,146.4 771.0,145.4 768.7,143.6 C766.4,141.8 764.7,138.7 762.9,136.5 C761.2,134.3 760.0,131.9 758.1,130.4 C756.3,128.9 753.3,129.2 751.7,127.6 C750.1,126.1 749.1,122.2 748.6,121.1" fill="none" stroke="#bba9c6" stroke-width="1.1"/><path d="M772.6,205.0 C770.9,204.6 765.1,203.0 762.4,202.5 C759.7,201.9 758.3,202.1 756.4,201.6 C754.5,201.1 753.2,199.7 750.8,199.4 C748.5,199.1 744.7,200.2 742.3,199.7 C739.9,199.3 737.5,197.2 736.5,196.7" fill="none" stroke="#bba9c6" stroke-width="1.1"/><path d="M735.2,196.2 C735.5,194.9 736.7,190.5 737.3,188.1 C737.9,185.8 737.9,184.6 738.6,182.1 C739.3,179.7 740.7,175.9 741.3,173.5 C741.9,171.0 742.4,169.9 742.1,167.6 C741.9,165.3 739.9,162.2 739.9,159.8 C740.0,157.3 742.5,155.5 742.6,153.1 C742.8,150.6 740.6,147.4 740.7,145.0 C740.9,142.7 743.1,141.2 743.6,138.9 C744.0,136.6 743.2,133.8 743.5,131.0 C743.8,128.2 745.0,123.7 745.3,122.2" fill="none" stroke="#bba9c6" stroke-width="1.1"/><path d="M396.7,197.4 C397.6,196.8 400.4,195.1 402.2,193.8 C404.1,192.5 406.0,190.9 407.8,189.5 C409.6,188.0 411.3,186.7 413.1,185.2 C414.8,183.8 416.5,182.7 418.3,180.7 C420.1,178.7 422.1,175.2 423.8,173.3 C425.4,171.5 426.4,171.5 428.3,169.7 C430.1,168.0 433.2,164.3 434.9,162.8 C436.6,161.3 437.0,162.5 438.4,160.9 C439.8,159.3 441.3,155.2 443.2,153.4 C445.2,151.6 448.9,150.8 450.0,150.2" fill="none" stroke="#bba9c6" stroke-width="1.1"/><path d="M611.9,447.4 C612.0,446.1 612.1,442.8 612.5,439.8 C613.0,436.9 614.1,432.4 614.6,429.6 C615.0,426.8 615.0,425.4 615.2,423.3 C615.4,421.2 616.0,419.8 615.9,417.1 C615.7,414.4 614.1,409.9 614.5,407.0 C614.8,404.1 617.6,402.0 617.9,399.8 C618.3,397.6 616.8,395.0 616.6,394.0" fill="none" stroke="#bba9c6" stroke-width="1.1"/><path d="M530.5,407.4 C531.4,406.6 533.6,404.5 535.6,402.7 C537.7,401.0 541.1,398.7 542.9,396.8 C544.7,394.9 545.0,393.5 546.4,391.6 C547.7,389.6 548.9,387.2 551.0,385.3 C553.2,383.3 557.9,380.8 559.3,379.9" fill="none" stroke="#bba9c6" stroke-width="1.1"/><path d="M559.1,380.7 C560.5,380.9 564.6,381.3 567.2,382.1 C569.9,382.8 573.1,385.1 575.1,385.4 C577.0,385.7 577.3,383.5 579.1,384.0 C580.9,384.6 583.2,387.6 585.9,388.7 C588.6,389.8 592.9,390.6 595.4,390.6 C597.9,390.6 598.5,388.0 601.1,388.6 C603.6,389.2 608.3,393.2 610.9,394.1 C613.5,395.0 615.7,394.1 616.6,394.0" fill="none" stroke="#bba9c6" stroke-width="1.1"/><path d="M653.9,376.7 L643.6,375.5" fill="none" stroke="#bba9c6" stroke-width="1.1"/><path d="M615.0,396.0 C616.3,394.9 620.3,391.0 622.5,389.4 C624.7,387.8 626.2,388.1 628.3,386.5 C630.4,384.9 632.7,381.8 635.2,379.9 C637.8,378.1 642.2,376.2 643.6,375.5" fill="none" stroke="#bba9c6" stroke-width="1.1"/><path d="M781.7,280.5 C780.8,279.8 778.3,277.8 776.1,276.5 C773.9,275.2 771.1,273.8 768.4,272.7 C765.8,271.6 762.6,270.5 760.2,269.8 C757.7,269.1 755.6,269.5 753.7,268.5 C751.8,267.6 751.3,265.1 748.9,264.3 C746.6,263.4 741.8,263.7 739.6,263.5 C737.3,263.2 737.8,263.3 735.3,262.6 C732.9,261.9 727.3,260.1 724.8,259.3 C722.2,258.5 721.9,258.9 719.9,257.9 C718.0,256.9 714.1,254.0 712.9,253.2" fill="none" stroke="#bba9c6" stroke-width="1.1"/><path d="M735.9,196.3 C734.8,196.8 731.0,197.9 729.5,199.4 C727.9,200.8 728.3,203.3 726.7,205.1 C725.2,206.9 722.4,208.8 720.2,210.2 C718.1,211.7 714.9,213.3 713.8,213.9" fill="none" stroke="#bba9c6" stroke-width="1.1"/><path d="M713.4,251.1 C713.5,250.0 714.7,246.4 714.4,244.2 C714.1,242.0 712.1,240.0 711.7,237.8 C711.2,235.5 711.5,233.7 711.6,230.8 C711.7,227.9 712.0,223.3 712.4,220.5 C712.8,217.7 713.6,215.0 713.8,213.9" fill="none" stroke="#bba9c6" stroke-width="1.1"/><path d="M715.5,213.1 C714.0,212.9 709.0,212.6 706.4,211.7 C703.8,210.8 701.8,209.5 699.8,207.6 C697.9,205.7 696.3,202.3 694.6,200.5 C692.8,198.6 690.7,198.1 689.1,196.7 C687.5,195.3 687.2,193.0 685.0,192.1 C682.9,191.3 678.5,192.6 676.3,191.5 C674.0,190.4 673.2,187.4 671.3,185.5 C669.5,183.7 666.7,181.6 665.1,180.4 C663.5,179.2 663.5,179.5 661.7,178.6 C660.0,177.6 655.9,175.2 654.8,174.5" fill="none" stroke="#bba9c6" stroke-width="1.1"/><path d="M593.5,295.8 C594.7,296.5 598.8,298.6 600.7,299.9 C602.6,301.3 602.4,302.9 604.9,303.9 C607.4,304.9 613.0,304.5 615.7,305.9 C618.4,307.2 620.0,310.9 620.9,311.9" fill="none" stroke="#bba9c6" stroke-width="1.1"/><path d="M593.6,297.5 C593.8,296.0 593.8,291.4 594.7,288.3 C595.6,285.3 598.1,281.7 598.9,279.3 C599.6,276.8 598.4,275.5 598.9,273.4 C599.5,271.3 601.0,269.1 602.1,266.4 C603.1,263.8 605.0,259.6 605.3,257.3 C605.6,254.9 603.7,254.6 603.8,252.3 C603.9,250.0 604.8,246.0 606.0,243.5 C607.1,241.0 609.6,239.6 610.7,237.3 C611.7,235.0 612.0,231.0 612.3,229.8" fill="none" stroke="#bba9c6" stroke-width="1.1"/><path d="M620.1,314.1 C621.3,313.2 625.1,310.4 627.5,308.7 C629.9,307.1 632.0,304.9 634.3,304.2 C636.6,303.5 639.1,305.1 641.3,304.6 C643.5,304.1 645.4,302.7 647.5,301.2 C649.7,299.8 652.3,297.2 654.3,295.8 C656.4,294.5 657.8,293.8 659.7,293.0 C661.6,292.1 663.5,292.1 665.7,291.0 C667.8,289.9 670.3,287.3 672.5,286.5 C674.7,285.6 676.8,286.7 679.1,286.0 C681.3,285.3 684.8,282.9 685.9,282.3" fill="none" stroke="#bba9c6" stroke-width="1.1"/><path d="M611.8,228.2 L619.6,223.7" fill="none" stroke="#bba9c6" stroke-width="1.1"/><path d="M621.5,221.8 C622.4,222.5 625.5,224.2 626.9,226.1 C628.2,227.9 627.5,231.3 629.4,233.0 C631.3,234.7 636.0,235.1 638.3,236.3 C640.6,237.6 641.5,239.4 643.1,240.5 C644.7,241.6 646.0,241.2 647.7,242.7 C649.5,244.1 651.4,247.3 653.6,249.2 C655.9,251.1 659.0,252.6 661.1,254.2 C663.3,255.8 665.0,257.8 666.8,258.8 C668.6,259.8 670.2,259.4 672.0,260.2 C673.9,261.0 675.7,262.4 677.7,263.7 C679.7,265.0 682.0,266.3 683.8,267.9 C685.7,269.5 688.1,272.3 688.9,273.2" fill="none" stroke="#bba9c6" stroke-width="1.1"/><path d="M684.2,283.8 L688.9,273.2" fill="none" stroke="#bba9c6" stroke-width="1.1"/><path d="M643.0,376.7 C642.7,375.5 641.9,372.0 641.4,369.8 C640.9,367.6 640.7,366.0 640.0,363.5 C639.4,361.0 638.4,357.9 637.4,354.8 C636.4,351.8 634.9,347.3 634.1,345.1 C633.3,343.0 634.0,343.9 632.8,341.6 C631.7,339.4 628.4,334.4 627.4,331.7 C626.4,328.9 627.6,327.7 626.8,325.2 C626.0,322.7 623.7,319.0 622.7,316.8 C621.7,314.6 621.2,312.7 620.9,311.9" fill="none" stroke="#bba9c6" stroke-width="1.1"/><path d="M575.1,301.4 C574.0,302.2 570.3,304.3 568.6,306.1 C567.0,307.9 566.4,310.0 565.2,312.2 C564.0,314.5 562.9,317.1 561.3,319.6 C559.8,322.2 556.7,326.2 555.8,327.5" fill="none" stroke="#bba9c6" stroke-width="1.1"/><path d="M559.0,379.2 C558.9,378.3 558.2,375.7 558.3,373.4 C558.4,371.1 559.9,368.2 559.5,365.2 C559.2,362.3 556.6,357.9 556.0,355.5 C555.4,353.0 555.6,352.8 555.8,350.5 C556.1,348.2 557.4,344.1 557.6,341.5 C557.8,338.9 557.3,337.3 557.0,334.9 C556.8,332.6 556.0,328.7 555.8,327.5" fill="none" stroke="#bba9c6" stroke-width="1.1"/><path d="M573.2,300.1 C575.0,299.5 580.8,297.5 584.0,296.8 C587.2,296.1 591.0,296.0 592.4,295.9" fill="none" stroke="#bba9c6" stroke-width="1.1"/><path d="M517.0,249.4 C518.2,250.4 521.7,253.9 523.7,255.4 C525.8,256.9 527.6,256.7 529.3,258.5 C531.0,260.3 532.3,264.1 533.7,266.0 C535.1,267.9 535.9,268.4 537.6,269.8 C539.4,271.1 542.1,272.4 544.1,274.1 C546.2,275.8 548.2,277.9 549.9,280.0 C551.7,282.2 552.6,285.2 554.5,286.9 C556.3,288.7 558.4,288.9 560.8,290.4 C563.2,291.9 566.6,294.2 568.7,296.0 C570.8,297.8 572.7,300.2 573.5,301.1" fill="none" stroke="#bba9c6" stroke-width="1.1"/><path d="M540.8,216.0 C539.5,217.2 535.1,221.5 533.0,223.4 C531.0,225.2 529.3,224.4 528.5,226.8 C527.7,229.2 529.1,234.9 528.0,237.7 C526.9,240.4 523.8,241.4 522.1,243.5 C520.3,245.6 518.1,249.2 517.3,250.4" fill="none" stroke="#bba9c6" stroke-width="1.1"/><path d="M540.2,214.2 C541.0,214.2 542.8,213.2 544.9,214.0 C547.1,214.8 550.3,217.9 553.1,219.0 C555.9,220.1 558.9,220.6 561.7,220.6 C564.6,220.6 567.8,218.8 570.4,218.9 C573.0,218.9 575.1,220.2 577.3,221.1 C579.5,221.9 581.4,223.3 583.5,223.8 C585.6,224.4 587.7,224.0 590.0,224.4 C592.2,224.7 594.7,225.3 597.0,226.0 C599.3,226.6 601.0,227.7 603.6,228.3 C606.1,228.9 610.9,229.5 612.3,229.8" fill="none" stroke="#bba9c6" stroke-width="1.1"/><path d="M707.6,343.1 C707.7,341.9 708.9,337.7 708.5,335.7 C708.0,333.7 706.0,333.3 705.1,331.0 C704.1,328.7 704.2,324.4 702.9,321.7 C701.6,319.0 698.3,316.6 697.3,314.8 C696.3,312.9 697.2,312.7 696.7,310.5 C696.2,308.2 695.1,303.6 694.4,301.2 C693.6,298.7 693.1,297.6 692.3,295.8 C691.5,294.0 690.7,292.5 689.6,290.2 C688.5,288.0 686.5,283.6 685.9,282.3" fill="none" stroke="#bba9c6" stroke-width="1.1"/><path d="M539.1,216.5 C539.0,215.0 538.9,210.4 538.7,207.9 C538.5,205.4 538.3,204.4 538.0,201.6 C537.8,198.8 537.9,193.9 537.2,191.1 C536.4,188.3 534.3,187.4 533.8,185.1 C533.2,182.7 534.2,179.4 533.9,177.0 C533.6,174.6 532.1,173.0 531.9,170.7 C531.8,168.4 532.8,164.6 533.0,163.3" fill="none" stroke="#bba9c6" stroke-width="1.1"/><path d="M637.6,171.0 C637.0,172.5 634.9,177.4 633.8,180.2 C632.7,183.0 631.5,185.5 631.2,187.8 C630.9,190.2 632.5,192.0 631.9,194.2 C631.4,196.4 628.8,198.4 627.7,201.1 C626.6,203.7 625.8,207.5 625.2,210.0 C624.6,212.5 625.0,213.7 624.0,216.0 C623.1,218.3 620.4,222.4 619.6,223.7" fill="none" stroke="#bba9c6" stroke-width="1.1"/><path d="M714.3,253.9 C712.9,254.6 708.6,256.9 706.2,258.1 C703.7,259.3 701.6,259.3 699.4,261.3 C697.2,263.3 694.9,268.0 693.2,270.0 C691.4,272.0 689.6,272.7 688.9,273.2" fill="none" stroke="#bba9c6" stroke-width="1.1"/><path d="M494.7,256.6 C494.6,257.4 494.8,259.2 494.4,261.4 C494.0,263.6 492.7,267.1 492.4,269.8 C492.0,272.4 492.6,275.0 492.2,277.3 C491.9,279.7 490.5,281.5 490.0,283.8 C489.6,286.2 489.8,288.6 489.6,291.2 C489.4,293.7 488.9,296.6 488.9,299.2 C489.0,301.8 490.5,304.6 489.9,306.6 C489.4,308.6 486.2,309.2 485.8,311.4 C485.4,313.5 487.5,316.7 487.5,319.4 C487.5,322.1 486.1,326.1 485.8,327.5" fill="none" stroke="#bba9c6" stroke-width="1.1"/><path d="M496.4,256.4 C495.4,256.1 493.1,255.5 490.7,254.6 C488.2,253.6 484.4,251.8 481.7,250.5 C478.9,249.2 476.0,247.6 474.3,246.7 C472.6,245.9 473.4,246.3 471.5,245.5 C469.6,244.7 464.4,242.5 462.9,241.9" fill="none" stroke="#bba9c6" stroke-width="1.1"/><path d="M417.3,252.0 C418.2,252.9 421.7,255.0 422.6,257.3 C423.6,259.6 422.2,263.6 423.1,266.0 C424.0,268.5 426.7,269.9 428.0,272.1 C429.3,274.2 430.2,276.9 431.1,279.0 C431.9,281.0 432.5,282.6 433.4,284.6 C434.2,286.6 435.4,288.7 436.2,290.7 C436.9,292.8 437.2,295.0 437.9,297.1 C438.5,299.1 438.6,300.7 440.1,303.0 C441.5,305.3 445.4,308.6 446.4,310.8 C447.4,312.9 445.5,313.6 446.2,315.8 C446.8,318.0 449.7,322.6 450.4,324.0" fill="none" stroke="#bba9c6" stroke-width="1.1"/><path d="M421.9,249.5 C423.2,249.2 426.7,248.3 429.8,247.9 C433.0,247.6 438.3,247.9 440.9,247.2 C443.5,246.5 442.7,244.5 445.2,243.6 C447.8,242.6 453.3,241.8 456.3,241.5 C459.2,241.2 461.8,241.8 462.9,241.9" fill="none" stroke="#bba9c6" stroke-width="1.1"/><path d="M449.8,322.5 C451.3,323.9 456.0,329.1 458.6,331.1 C461.2,333.1 463.3,332.6 465.3,334.4 C467.4,336.2 469.9,340.6 470.8,341.8" fill="none" stroke="#bba9c6" stroke-width="1.1"/><path d="M470.5,341.4 C472.0,340.1 476.5,335.8 479.1,333.5 C481.6,331.2 484.7,328.5 485.8,327.5" fill="none" stroke="#bba9c6" stroke-width="1.1"/><path d="M555.6,326.6 C554.6,326.7 552.2,327.3 549.9,327.3 C547.7,327.3 544.3,326.6 542.0,326.7 C539.7,326.7 538.3,327.3 536.2,327.4 C534.1,327.4 531.5,326.5 529.3,326.9 C527.1,327.3 525.4,329.7 522.8,329.6 C520.2,329.6 516.4,326.9 513.6,326.5 C510.9,326.2 508.3,327.2 506.3,327.6 C504.3,328.0 503.9,329.2 501.9,328.9 C499.8,328.6 496.8,326.1 494.1,325.9 C491.5,325.7 487.2,327.2 485.8,327.5" fill="none" stroke="#bba9c6" stroke-width="1.1"/><path d="M516.2,251.0 C515.5,251.2 514.2,251.6 511.7,252.4 C509.1,253.1 503.7,254.9 501.0,255.4 C498.2,256.0 496.3,255.6 495.4,255.7" fill="none" stroke="#bba9c6" stroke-width="1.1"/><path d="M482.3,148.2 C482.0,149.4 481.0,153.0 480.6,155.3 C480.1,157.5 480.5,159.0 479.8,161.9 C479.1,164.7 477.3,169.9 476.4,172.5 C475.4,175.1 474.6,175.8 474.1,177.5 C473.5,179.2 473.8,180.3 473.3,182.7 C472.7,185.1 471.1,188.9 470.6,192.0 C470.0,195.0 470.2,199.2 470.0,201.3 C469.8,203.3 469.2,201.9 469.3,204.1 C469.3,206.4 470.6,211.9 470.3,214.8 C470.1,217.8 468.8,219.8 467.7,221.8 C466.7,223.7 464.4,224.4 464.1,226.7 C463.8,229.0 466.0,233.1 465.8,235.6 C465.6,238.1 463.4,240.8 462.9,241.9" fill="none" stroke="#bba9c6" stroke-width="1.1"/><path d="M375.5,324.9 C376.9,324.4 381.8,322.2 384.2,321.8 C386.6,321.5 387.2,322.5 389.9,322.9 C392.6,323.3 397.6,324.0 400.5,324.2 C403.5,324.4 405.5,324.3 407.4,324.1 C409.3,323.9 409.9,323.4 412.0,323.1 C414.1,322.7 417.5,321.6 420.2,322.0 C422.8,322.4 425.5,325.2 428.0,325.3 C430.6,325.3 432.7,322.4 435.5,322.3 C438.3,322.1 442.3,324.1 444.8,324.4 C447.3,324.7 449.4,324.1 450.4,324.0" fill="none" stroke="#bba9c6" stroke-width="1.1"/><path d="M466.1,357.0 C466.5,355.5 467.6,350.3 468.4,347.8 C469.2,345.3 470.4,342.8 470.8,341.8" fill="none" stroke="#bba9c6" stroke-width="1.1"/>
<path d="M985.0,89.0 C982.8,96.6 975.3,122.6 972.0,134.6 C968.7,146.6 965.7,152.3 965.0,161.0 C964.3,169.7 968.8,179.0 968.0,187.0 C967.2,195.0 964.6,202.0 960.0,208.8 C955.4,215.6 947.9,223.8 940.5,227.7 C933.1,231.5 923.5,231.7 915.4,231.9 C907.3,232.1 895.9,229.5 892.0,229.0" fill="none" stroke="#a29ab4" stroke-width="1.6"/>
<path d="M915.4,231.9 C913.3,235.7 905.5,245.2 902.8,254.9 C900.1,264.6 900.0,277.5 899.0,290.0 C898.0,302.5 897.3,322.1 896.5,330.0 C895.7,337.9 894.0,334.9 894.2,337.7 C894.4,340.4 894.4,342.1 897.5,346.5 C900.6,350.9 909.7,358.8 913.0,364.2 C916.3,369.6 916.7,376.2 917.4,378.6" fill="none" stroke="#a29ab4" stroke-width="1.6"/>
<path d="M890.9,378.6 C895.3,378.6 913.2,375.1 917.4,378.6 C921.6,382.1 915.0,393.2 916.3,399.6 C917.6,406.1 918.0,411.8 925.2,417.3 C932.4,422.8 950.1,428.7 959.5,432.8 C968.9,436.9 974.4,439.7 981.6,441.7 C988.9,443.7 994.6,443.3 1003.0,445.0 C1011.4,446.7 1027.2,450.8 1032.0,452.0" fill="none" stroke="#a29ab4" stroke-width="1.6"/>
<path d="M925.2,417.3 L899.7,428.4" fill="none" stroke="#a29ab4" stroke-width="1.6"/>
<path d="M398.8,106.3 C398.7,107.0 398.2,109.3 398.3,110.8 C398.4,112.2 399.1,113.4 399.4,114.9 C399.7,116.4 401.1,118.6 400.2,119.9 C399.3,121.1 395.6,121.8 393.9,122.5 C392.2,123.2 391.8,123.7 390.0,124.1 C388.3,124.6 385.2,124.7 383.3,125.4 C381.5,126.1 379.9,127.3 378.9,128.3 C377.8,129.2 377.3,129.5 377.1,131.0 C376.9,132.5 377.8,135.1 377.8,137.1 C377.7,139.1 377.1,141.2 376.9,143.1 C376.6,145.0 376.2,147.1 376.2,148.6 C376.2,150.1 376.4,150.3 376.9,152.2 C377.4,154.0 378.7,157.4 379.2,159.5 C379.8,161.6 379.5,163.0 380.1,164.7 C380.6,166.5 381.8,168.1 382.6,169.9 C383.4,171.7 384.5,173.6 384.8,175.5 C385.1,177.4 384.1,179.6 384.4,181.4 C384.6,183.1 386.1,184.4 386.4,186.1 C386.7,187.8 385.5,190.0 386.3,191.8 C387.1,193.6 389.3,195.4 391.1,196.7 C392.9,198.1 395.3,199.2 397.1,199.9 C398.9,200.6 400.3,200.3 402.0,201.0 C403.6,201.6 405.8,202.6 407.3,203.8 C408.8,205.0 409.6,207.1 411.0,208.3 C412.5,209.6 414.8,210.1 415.9,211.3 C417.0,212.6 416.4,214.0 417.6,215.6 C418.8,217.2 421.6,219.4 423.2,220.8 C424.7,222.2 425.5,222.7 426.7,224.0 C428.0,225.3 430.3,226.6 430.5,228.5 C430.8,230.4 428.8,233.4 428.3,235.6 C427.8,237.7 427.6,239.6 427.4,241.2 C427.1,242.8 427.8,243.8 426.9,245.3 C425.9,246.8 423.3,249.1 421.6,250.2 C419.9,251.3 418.4,251.0 416.5,251.9 C414.6,252.9 412.0,254.7 410.3,255.8 C408.7,256.9 407.9,257.6 406.6,258.7 C405.4,259.7 404.1,261.1 402.7,261.9 C401.3,262.6 399.4,262.3 398.2,263.2 C397.0,264.0 396.4,265.9 395.3,267.0 C394.1,268.1 392.7,268.5 391.3,269.7 C390.0,271.0 388.8,273.3 387.0,274.5 C385.2,275.6 381.2,275.3 380.4,276.7 C379.6,278.0 381.5,280.5 382.1,282.4 C382.6,284.3 383.6,286.4 383.8,288.0 C384.0,289.7 383.0,291.1 383.3,292.4 C383.7,293.8 385.6,294.4 385.9,296.2 C386.2,298.1 384.8,301.5 385.0,303.4 C385.1,305.4 386.7,306.1 386.7,307.7 C386.6,309.3 385.2,311.0 384.4,312.8 C383.6,314.5 382.9,316.6 381.9,318.2 C380.8,319.8 379.2,320.9 378.3,322.2 C377.3,323.6 376.9,324.7 376.0,326.2 C375.1,327.6 372.9,329.5 372.7,331.0 C372.6,332.5 374.0,333.4 375.1,335.2 C376.2,337.0 378.0,340.0 379.1,341.8 C380.2,343.6 380.7,344.7 381.6,345.9 C382.5,347.1 383.5,347.6 384.6,349.1 C385.8,350.6 387.4,353.3 388.5,354.9 C389.6,356.5 390.3,357.7 391.5,358.6 C392.6,359.6 393.8,359.6 395.4,360.5 C396.9,361.4 399.2,363.1 400.8,364.2 C402.5,365.3 404.3,366.0 405.5,367.0 C406.7,368.0 406.4,369.5 407.9,370.4 C409.4,371.3 412.8,371.6 414.4,372.3 C416.0,373.0 416.7,372.8 417.6,374.5 C418.5,376.1 419.1,380.1 419.9,382.2 C420.8,384.4 421.8,385.6 422.6,387.4 C423.4,389.1 424.1,391.1 424.6,392.8 C425.1,394.4 425.5,395.9 425.6,397.3 C425.7,398.8 425.1,399.7 425.3,401.4 C425.4,403.2 426.3,406.1 426.7,407.9 C427.1,409.6 427.3,410.5 427.8,412.1 C428.2,413.8 428.8,416.2 429.3,417.9 C429.7,419.6 430.3,421.0 430.3,422.5 C430.4,423.9 429.3,425.0 429.7,426.7 C430.1,428.5 432.3,431.0 432.7,432.9 C433.1,434.8 431.9,436.4 432.1,438.1 C432.2,439.8 433.2,440.7 433.7,442.8 C434.2,444.9 434.9,448.4 435.0,450.8 C435.2,453.3 434.8,455.4 434.6,457.5 C434.4,459.5 434.0,461.4 433.9,463.0 C433.9,464.6 434.0,466.3 434.0,467.0" fill="none" stroke="#a697b2" stroke-width="2.4" stroke-linejoin="round"/>
<path d="M239.7,359.1 C240.4,358.9 241.9,358.6 243.6,358.2 C245.2,357.7 247.9,357.2 249.6,356.3 C251.4,355.3 252.4,353.4 254.0,352.5 C255.7,351.6 257.8,351.2 259.7,350.9 C261.6,350.5 263.7,350.6 265.5,350.5 C267.4,350.4 268.9,350.5 270.8,350.3 C272.8,350.0 275.8,349.6 277.5,349.1 C279.2,348.7 279.5,348.3 281.1,347.7 C282.7,347.1 285.4,345.9 287.1,345.5 C288.9,345.2 290.0,346.0 291.7,345.7 C293.5,345.4 295.5,344.3 297.5,343.9 C299.5,343.4 302.1,343.0 303.9,343.0 C305.7,342.9 306.8,343.6 308.4,343.6 C310.1,343.6 312.0,343.3 313.9,343.1 C315.7,342.9 317.7,342.9 319.4,342.2 C321.0,341.6 321.7,339.8 323.6,339.4 C325.5,339.0 328.6,340.0 330.8,340.0 C332.9,340.0 334.6,340.0 336.4,339.7 C338.2,339.4 339.6,338.6 341.4,338.2 C343.3,337.7 345.5,337.2 347.3,337.0 C349.2,336.7 350.6,337.0 352.5,336.7 C354.3,336.4 356.6,335.8 358.6,335.1 C360.7,334.5 363.1,333.4 364.8,332.6 C366.5,331.9 367.3,330.2 368.9,330.9 C370.4,331.6 372.5,335.0 374.1,336.9 C375.7,338.7 377.8,341.0 378.5,341.8" fill="none" stroke="#a697b2" stroke-width="2.4" stroke-linejoin="round"/>
<path d="M238.2,231.3 C238.9,231.9 240.8,233.7 242.2,235.0 C243.7,236.2 245.5,237.9 247.0,238.8 C248.6,239.7 250.3,239.3 251.4,240.3 C252.5,241.3 252.6,243.6 253.5,244.9 C254.5,246.2 255.9,247.0 257.1,248.1 C258.3,249.1 259.5,249.8 260.7,250.9 C261.8,252.0 262.9,252.9 264.0,254.5 C265.0,256.0 266.2,258.3 267.1,260.1 C268.0,261.9 268.4,264.1 269.1,265.5 C269.8,267.0 270.4,267.6 271.3,269.0 C272.3,270.3 273.7,272.0 274.8,273.7 C275.9,275.4 276.4,277.9 277.7,279.0 C279.0,280.1 280.9,280.2 282.5,280.5 C284.2,280.8 285.5,280.2 287.5,280.8 C289.5,281.3 292.3,283.3 294.3,284.0 C296.3,284.8 298.1,284.8 299.5,285.3 C301.0,285.7 301.6,285.9 303.1,286.8 C304.6,287.8 306.8,290.1 308.7,291.0 C310.5,291.8 312.5,291.3 314.2,291.9 C316.0,292.6 318.7,293.6 319.1,294.9 C319.5,296.2 317.2,298.1 316.5,299.7 C315.8,301.2 315.7,302.7 314.9,304.0 C314.1,305.4 312.5,306.4 311.7,307.7 C310.8,309.1 310.5,310.5 309.8,311.9 C309.2,313.3 308.3,314.4 307.5,316.2 C306.7,318.0 305.7,320.6 305.0,322.7 C304.3,324.8 303.5,327.4 303.2,329.0 C302.8,330.7 303.1,330.9 303.0,332.5 C302.9,334.2 302.9,337.0 302.5,339.0 C302.1,341.0 301.9,343.3 300.8,344.6 C299.6,345.8 297.6,346.1 295.5,346.5 C293.3,346.8 290.0,346.7 287.9,346.7 C285.8,346.7 284.9,346.1 283.0,346.3 C281.1,346.5 278.3,347.4 276.4,347.9 C274.5,348.4 273.3,348.7 271.6,349.1 C269.9,349.4 266.9,349.8 266.0,350.0" fill="none" stroke="#a697b2" stroke-width="2.4" stroke-linejoin="round"/>
<path d="M435.0,457.0 C435.7,457.0 438.0,456.8 439.5,456.9 C441.1,457.0 442.5,457.8 444.4,457.5 C446.3,457.3 449.3,455.5 451.2,455.4 C453.0,455.2 453.8,456.3 455.4,456.4 C457.1,456.4 459.5,455.8 461.2,455.7 C463.0,455.5 464.2,455.7 465.9,455.6 C467.6,455.4 469.3,455.1 471.4,454.8 C473.4,454.6 476.3,454.5 478.2,454.2 C480.2,453.9 481.4,453.9 483.0,453.2 C484.6,452.5 486.4,450.4 488.0,450.0 C489.6,449.7 490.9,451.2 492.7,451.1 C494.5,451.0 496.9,449.8 498.7,449.2 C500.5,448.7 501.8,448.4 503.5,447.7 C505.1,447.0 506.9,445.4 508.7,444.9 C510.5,444.4 512.2,445.2 514.1,444.7 C515.9,444.2 518.1,443.1 519.9,442.1 C521.7,441.1 522.9,439.6 524.7,438.5 C526.5,437.4 529.2,436.4 530.7,435.5 C532.1,434.5 532.1,433.6 533.5,432.8 C534.9,431.9 537.2,430.6 539.1,430.5 C541.0,430.4 542.7,431.5 544.7,432.0 C546.7,432.5 549.2,433.4 551.0,433.6 C552.7,433.7 554.1,432.6 555.4,432.8 C556.7,432.9 557.3,433.7 558.8,434.4 C560.3,435.1 562.4,436.4 564.2,436.9 C566.0,437.4 568.1,436.8 569.7,437.3 C571.2,437.9 572.1,439.7 573.7,440.2 C575.2,440.6 577.2,439.7 579.1,440.0 C581.0,440.4 583.2,441.8 585.1,442.3 C587.0,442.8 588.5,442.9 590.3,442.9 C592.1,443.0 594.1,442.2 595.8,442.4 C597.5,442.6 598.7,443.5 600.4,444.1 C602.1,444.6 604.0,445.8 605.9,445.9 C607.8,446.0 609.8,444.7 611.6,444.8 C613.5,445.0 615.1,446.4 616.9,446.7 C618.8,446.9 620.6,446.2 622.8,446.5 C624.9,446.8 628.2,448.2 629.9,448.4 C631.7,448.5 631.7,447.4 633.3,447.5 C634.9,447.6 637.4,448.4 639.4,449.0 C641.4,449.6 643.5,450.5 645.3,451.0 C647.1,451.4 648.9,451.7 650.3,451.8 C651.7,451.8 652.1,451.2 653.6,451.3 C655.2,451.4 658.1,452.0 659.8,452.3 C661.6,452.6 662.6,452.7 664.2,452.9 C665.8,453.1 667.6,453.0 669.4,453.6 C671.1,454.2 672.8,456.1 674.6,456.4 C676.4,456.6 678.4,455.0 680.1,455.2 C681.8,455.3 683.5,456.7 685.0,457.2 C686.5,457.7 687.4,457.9 689.1,458.2 C690.7,458.5 693.3,458.8 694.9,459.0 C696.5,459.2 697.1,457.9 698.7,459.3 C700.4,460.6 704.0,465.7 705.0,467.0" fill="none" stroke="#a697b2" stroke-width="2.4" stroke-linejoin="round"/>
<path d="M705.6,466.0 C705.8,465.1 706.4,462.0 706.7,460.7 C707.0,459.4 707.0,459.4 707.1,458.1 C707.3,456.9 707.3,455.1 707.8,453.1 C708.2,451.2 709.7,448.3 709.9,446.4 C710.1,444.6 709.0,444.0 709.1,442.2 C709.1,440.4 709.7,438.1 710.3,435.9 C710.9,433.7 712.2,430.7 712.8,428.9 C713.4,427.1 713.3,426.4 713.9,425.1 C714.4,423.8 715.4,423.0 716.2,421.1 C717.0,419.3 717.3,415.7 718.7,414.2 C720.1,412.7 722.5,412.5 724.5,412.2 C726.5,411.8 728.8,412.8 730.6,412.3 C732.3,411.8 733.2,409.8 735.1,409.0 C737.1,408.1 740.2,408.0 742.4,407.2 C744.6,406.4 746.7,405.2 748.2,404.0 C749.8,402.8 750.6,401.5 751.7,400.2 C752.8,398.9 753.9,397.7 755.0,396.1 C756.1,394.6 757.3,392.9 758.4,391.0 C759.6,389.1 760.8,386.4 762.1,384.6 C763.4,382.8 764.8,381.7 766.1,380.4 C767.5,379.1 768.7,377.6 770.0,376.6 C771.3,375.6 772.4,375.1 774.1,374.4 C775.8,373.7 778.4,373.0 780.1,372.5 C781.8,372.1 782.6,372.2 784.5,371.7 C786.3,371.1 789.2,370.1 791.1,369.1 C793.1,368.2 794.4,366.5 796.1,366.0 C797.8,365.4 799.6,365.9 801.4,365.7 C803.3,365.5 805.6,364.9 807.2,364.8 C808.8,364.8 809.4,365.5 811.1,365.3 C812.8,365.2 815.4,363.6 817.2,364.1 C819.0,364.5 820.5,366.8 822.0,368.1 C823.6,369.4 824.7,370.3 826.4,371.8 C828.1,373.4 830.6,376.0 832.2,377.4 C833.7,378.9 834.4,379.8 835.5,380.6 C836.6,381.4 836.8,382.2 838.7,382.4 C840.7,382.6 844.9,381.7 847.2,381.9 C849.4,382.0 850.5,383.4 852.3,383.5 C854.2,383.6 856.2,382.9 858.2,382.6 C860.3,382.3 863.0,382.3 864.7,381.7 C866.3,381.0 866.6,379.2 868.3,378.7 C870.0,378.2 873.2,378.9 875.0,378.8 C876.9,378.7 878.0,378.4 879.4,378.2 C880.7,378.1 881.3,377.6 883.2,377.7 C885.2,377.8 889.6,378.4 890.9,378.6" fill="none" stroke="#a697b2" stroke-width="2.4" stroke-linejoin="round"/>
<path d="M805.6,110.3 C806.4,110.7 808.7,111.9 810.4,112.8 C812.2,113.7 814.3,114.7 816.3,115.4 C818.3,116.2 820.7,116.1 822.4,117.3 C824.1,118.4 824.6,121.3 826.3,122.5 C828.1,123.7 831.1,124.1 833.0,124.6 C834.8,125.1 835.8,125.6 837.3,125.6 C838.8,125.6 840.1,124.9 841.8,124.6 C843.4,124.3 845.1,124.1 847.1,123.9 C849.1,123.7 852.2,122.7 853.7,123.3 C855.2,123.9 855.0,126.2 856.1,127.7 C857.3,129.2 859.0,131.5 860.5,132.2 C861.9,132.9 863.2,132.3 864.7,131.9 C866.1,131.6 867.5,130.8 869.4,130.3 C871.3,129.7 874.4,129.2 876.3,128.7 C878.1,128.1 879.7,126.6 880.5,127.2 C881.3,127.8 880.3,130.6 881.0,132.5 C881.7,134.3 883.9,136.5 884.6,138.4 C885.4,140.3 884.7,142.2 885.3,143.9 C885.8,145.6 886.9,147.5 887.8,148.5 C888.8,149.5 889.7,148.9 891.0,149.7 C892.4,150.5 894.0,152.7 896.1,153.2 C898.2,153.7 901.3,152.4 903.4,152.6 C905.4,152.8 907.0,153.4 908.4,154.3 C909.8,155.2 910.4,157.0 912.0,158.0 C913.6,159.0 916.1,160.2 918.0,160.3 C919.9,160.4 921.4,159.0 923.4,158.6 C925.3,158.3 927.9,158.1 929.9,158.2 C931.9,158.4 933.6,159.4 935.3,159.3 C937.0,159.3 939.2,158.2 940.0,158.0" fill="none" stroke="#a697b2" stroke-width="2.4" stroke-linejoin="round"/>
<path d="M238.7,455.5 C239.6,455.5 242.7,455.6 244.5,455.7 C246.3,455.7 248.1,455.6 249.6,455.8 C251.1,456.0 251.8,456.5 253.4,456.8 C255.1,457.2 257.7,458.0 259.4,457.9 C261.1,457.9 262.2,456.6 263.7,456.6 C265.2,456.6 266.4,457.5 268.3,458.0 C270.1,458.4 273.1,458.8 275.0,459.2 C276.9,459.6 278.2,460.4 279.7,460.5 C281.3,460.6 282.5,459.6 284.1,459.9 C285.7,460.1 287.3,461.9 289.3,462.0 C291.2,462.1 293.6,460.4 295.5,460.4 C297.4,460.4 299.1,461.3 300.8,461.8 C302.5,462.3 304.4,463.3 305.7,463.3 C307.0,463.3 307.4,462.2 308.7,461.9 C310.1,461.6 312.0,461.5 314.0,461.8 C315.9,462.1 318.6,463.4 320.3,463.9 C321.9,464.3 322.2,464.4 323.8,464.3 C325.4,464.2 328.0,463.1 329.7,463.3 C331.5,463.5 332.7,465.1 334.3,465.3 C335.8,465.5 337.1,464.6 338.8,464.7 C340.5,464.8 342.5,465.8 344.5,465.8 C346.4,465.9 348.8,464.8 350.6,464.9 C352.4,464.9 353.7,465.9 355.3,466.1 C356.8,466.3 359.2,466.0 360.0,466.0" fill="none" stroke="#a697b2" stroke-width="2.4" stroke-linejoin="round"/>
<path d="M396.0,89.0 C397.0,90.8 401.5,97.2 402.0,100.0 C402.5,102.8 396.8,104.0 399.0,106.0 C401.2,108.0 410.0,110.3 415.0,112.0 C420.0,113.7 425.7,114.0 429.0,116.0 C432.3,118.0 436.0,121.7 435.0,124.0 C434.0,126.3 426.0,127.0 423.0,130.0 C420.0,133.0 414.0,138.5 417.0,142.0 C420.0,145.5 431.0,150.0 441.0,151.0 C451.0,152.0 466.0,147.0 477.0,148.0 C488.0,149.0 495.2,153.8 507.0,157.0 C518.8,160.2 537.5,166.8 548.0,167.0 C558.5,167.2 561.3,158.7 570.0,158.0 C578.7,157.3 590.0,161.5 600.0,163.0 C610.0,164.5 622.0,164.8 630.0,167.0 C638.0,169.2 640.5,175.5 648.0,176.0 C655.5,176.5 666.7,173.7 675.0,170.0 C683.3,166.3 690.7,160.5 698.0,154.0 C705.3,147.5 710.5,136.5 719.0,131.0 C727.5,125.5 739.0,123.7 749.0,121.0 C759.0,118.3 769.7,116.8 779.0,115.0 C788.3,113.2 800.7,110.8 805.0,110.0" fill="none" stroke="#a6a2b8" stroke-width="3.2" stroke-linejoin="round"/>
<path d="M805,110 C820,108 835,106 848,103 C860,99 875,94 887,88" fill="none" stroke="#b9c3cf" stroke-width="1.6"/>
<path d="M561,93 C566,105 572,115 577,125 C580,133 584,140 590,150" fill="none" stroke="#a6cde0" stroke-width="1.5"/>
<ellipse cx="483" cy="144" rx="4" ry="1.6" fill="#aad3df"/>
<path d="M890.5,88 L897,96.4 L912,103 L927.4,109.8 L937.4,109.8 L944,114.8" fill="none" stroke="#e59a9a" stroke-width="1.1"/>
<text x="389.0" y="156.8" font-size="12" fill="#7a6490" font-style="italic" stroke="#fff" stroke-opacity="0.75" stroke-width="2" paint-order="stroke" textLength="31.4" lengthAdjust="spacingAndGlyphs">Видин</text>
<text x="483.0" y="106.0" font-size="12" fill="#7a6490" font-style="italic" stroke="#fff" stroke-opacity="0.75" stroke-width="2" paint-order="stroke" textLength="19.6" lengthAdjust="spacingAndGlyphs">Dolj</text>
<text x="239.0" y="165.7" font-size="12" fill="#7a6490" font-style="italic" stroke="#fff" stroke-opacity="0.75" stroke-width="2" paint-order="stroke" textLength="39.0" lengthAdjust="spacingAndGlyphs">трална</text>
<text x="239.0" y="179.2" font-size="12" fill="#7a6490" font-style="italic" stroke="#fff" stroke-opacity="0.75" stroke-width="2" paint-order="stroke" textLength="26.0" lengthAdjust="spacingAndGlyphs">рбија</text>
<text x="417.4" y="197.0" font-size="12" fill="#7a6490" font-style="italic" stroke="#fff" stroke-opacity="0.75" stroke-width="2" paint-order="stroke" textLength="50.8" lengthAdjust="spacingAndGlyphs">Монтана</text>
<text x="481.6" y="207.0" font-size="12" fill="#7a6490" font-style="italic" stroke="#fff" stroke-opacity="0.75" stroke-width="2" paint-order="stroke" textLength="31.4" lengthAdjust="spacingAndGlyphs">Враца</text>
<text x="559.4" y="94.0" font-size="12" fill="#7a6490" font-style="italic" stroke="#fff" stroke-opacity="0.75" stroke-width="2" paint-order="stroke" textLength="14.0" lengthAdjust="spacingAndGlyphs">Olt</text>
<text x="606.4" y="122.4" font-size="12" fill="#7a6490" font-style="italic" stroke="#fff" stroke-opacity="0.75" stroke-width="2" paint-order="stroke" textLength="50.8" lengthAdjust="spacingAndGlyphs">Teleorman</text>
<text x="693.0" y="115.5" font-size="12" fill="#7a6490" font-style="italic" stroke="#fff" stroke-opacity="0.75" stroke-width="2" paint-order="stroke" textLength="35.4" lengthAdjust="spacingAndGlyphs">Giurgiu</text>
<text x="789.7" y="91.6" font-size="12" fill="#7a6490" font-style="italic" stroke="#fff" stroke-opacity="0.75" stroke-width="2" paint-order="stroke" textLength="39.0" lengthAdjust="spacingAndGlyphs">Călărași</text>
<text x="698.5" y="171.7" font-size="12" fill="#7a6490" font-style="italic" stroke="#fff" stroke-opacity="0.75" stroke-width="2" paint-order="stroke" textLength="21.0" lengthAdjust="spacingAndGlyphs">Русе</text>
<text x="777.7" y="143.3" font-size="12" fill="#7a6490" font-style="italic" stroke="#fff" stroke-opacity="0.75" stroke-width="2" paint-order="stroke" textLength="51.0" lengthAdjust="spacingAndGlyphs">Силистра</text>
<text x="560.3" y="195.7" font-size="12" fill="#7a6490" font-style="italic" stroke="#fff" stroke-opacity="0.75" stroke-width="2" paint-order="stroke" textLength="37.0" lengthAdjust="spacingAndGlyphs">Плевен</text>
<text x="749.3" y="177.1" font-size="12" fill="#7a6490" font-style="italic" stroke="#fff" stroke-opacity="0.75" stroke-width="2" paint-order="stroke" textLength="40.4" lengthAdjust="spacingAndGlyphs">Разград</text>
<text x="780.7" y="218.0" font-size="12" fill="#7a6490" font-style="italic" stroke="#fff" stroke-opacity="0.75" stroke-width="2" paint-order="stroke" textLength="36.0" lengthAdjust="spacingAndGlyphs">Шумен</text>
<text x="629.7" y="230.0" font-size="12" fill="#7a6490" font-style="italic" stroke="#fff" stroke-opacity="0.75" stroke-width="2" paint-order="stroke" textLength="81.0" lengthAdjust="spacingAndGlyphs">Велико Търново</text>
<text x="552.6" y="251.0" font-size="12" fill="#7a6490" font-style="italic" stroke="#fff" stroke-opacity="0.75" stroke-width="2" paint-order="stroke" textLength="30.8" lengthAdjust="spacingAndGlyphs">Ловеч</text>
<text x="837.5" y="230.0" font-size="12" fill="#7a6490" font-style="italic" stroke="#fff" stroke-opacity="0.75" stroke-width="2" paint-order="stroke" textLength="30.0" lengthAdjust="spacingAndGlyphs">Варна</text>
<text x="712.3" y="301.1" font-size="12" fill="#7a6490" font-style="italic" stroke="#fff" stroke-opacity="0.75" stroke-width="2" paint-order="stroke" textLength="35.0" lengthAdjust="spacingAndGlyphs">Сливен</text>
<text x="799.0" y="326.2" font-size="12" fill="#7a6490" font-style="italic" stroke="#fff" stroke-opacity="0.75" stroke-width="2" paint-order="stroke" textLength="37.0" lengthAdjust="spacingAndGlyphs">Бургас</text>
<text x="628.8" y="329.2" font-size="12" fill="#7a6490" font-style="italic" stroke="#fff" stroke-opacity="0.75" stroke-width="2" paint-order="stroke" textLength="72.5" lengthAdjust="spacingAndGlyphs">Стара Загора</text>
<text x="741.3" y="342.5" font-size="12" fill="#7a6490" font-style="italic" stroke="#fff" stroke-opacity="0.75" stroke-width="2" paint-order="stroke" textLength="32.0" lengthAdjust="spacingAndGlyphs">Ямбол</text>
<text x="574.0" y="351.4" font-size="12" fill="#7a6490" font-style="italic" stroke="#fff" stroke-opacity="0.75" stroke-width="2" paint-order="stroke" textLength="43.0" lengthAdjust="spacingAndGlyphs">Пловдив</text>
<text x="679.0" y="409.0" font-size="12" fill="#7a6490" font-style="italic" stroke="#fff" stroke-opacity="0.75" stroke-width="2" paint-order="stroke" textLength="40.0" lengthAdjust="spacingAndGlyphs">Хасково</text>
<text x="558.4" y="426.3" font-size="12" fill="#7a6490" font-style="italic" stroke="#fff" stroke-opacity="0.75" stroke-width="2" paint-order="stroke" textLength="37.8" lengthAdjust="spacingAndGlyphs">Смолян</text>
<text x="624.4" y="432.8" font-size="12" fill="#7a6490" font-style="italic" stroke="#fff" stroke-opacity="0.75" stroke-width="2" paint-order="stroke" textLength="52.4" lengthAdjust="spacingAndGlyphs">Кърджали</text>
<text x="496.0" y="302.5" font-size="12" fill="#7a6490" font-style="italic" stroke="#fff" stroke-opacity="0.75" stroke-width="2" paint-order="stroke" textLength="49.0" lengthAdjust="spacingAndGlyphs">Софийска</text>
<text x="392.6" y="340.4" font-size="12" fill="#7a6490" font-style="italic" stroke="#fff" stroke-opacity="0.75" stroke-width="2" paint-order="stroke" textLength="59.6" lengthAdjust="spacingAndGlyphs">Кюстендил</text>
<text x="444.6" y="410.7" font-size="12" fill="#7a6490" font-style="italic" stroke="#fff" stroke-opacity="0.75" stroke-width="2" paint-order="stroke" textLength="64.6" lengthAdjust="spacingAndGlyphs">Благоевград</text>
<text x="367.8" y="440.8" font-size="12" fill="#7a6490" font-style="italic" stroke="#fff" stroke-opacity="0.75" stroke-width="2" paint-order="stroke" textLength="65.5" lengthAdjust="spacingAndGlyphs">Југоисточен</text>
<text x="395.4" y="454.3" font-size="12" fill="#7a6490" font-style="italic" stroke="#fff" stroke-opacity="0.75" stroke-width="2" paint-order="stroke" textLength="11.2" lengthAdjust="spacingAndGlyphs">СР</text>
<text x="260.5" y="467.0" font-size="12" fill="#7a6490" font-style="italic" stroke="#fff" stroke-opacity="0.75" stroke-width="2" paint-order="stroke" textLength="63.0" lengthAdjust="spacingAndGlyphs">Пелагониски</text>
<text x="835.9" y="419.5" font-size="12" fill="#7a6490" font-style="italic" stroke="#fff" stroke-opacity="0.75" stroke-width="2" paint-order="stroke" textLength="43.3" lengthAdjust="spacingAndGlyphs">Kırklareli</text>
<text x="909.6" y="98.1" font-size="12" fill="#7a6490" font-style="italic" stroke="#fff" stroke-opacity="0.75" stroke-width="2" paint-order="stroke" textLength="49.4" lengthAdjust="spacingAndGlyphs">Constanța</text>
<text x="861.5" y="173.9" font-size="12" fill="#7a6490" font-style="italic" stroke="#fff" stroke-opacity="0.75" stroke-width="2" paint-order="stroke" textLength="35.8" lengthAdjust="spacingAndGlyphs">Добрич</text>
<text x="239.0" y="101.5" font-size="15" fill="#6e5a84" stroke="#fff" stroke-opacity="0.75" stroke-width="2" paint-order="stroke" textLength="35.0" lengthAdjust="spacingAndGlyphs">рбија</text>
<text x="239.0" y="302.5" font-size="15" fill="#6e5a84" stroke="#fff" stroke-opacity="0.75" stroke-width="2" paint-order="stroke" textLength="31.0" lengthAdjust="spacingAndGlyphs">ova /</text>
<text x="239.0" y="319.3" font-size="15" fill="#6e5a84" stroke="#fff" stroke-opacity="0.75" stroke-width="2" paint-order="stroke" textLength="27.0" lengthAdjust="spacingAndGlyphs">sovo</text>
<text x="290.8" y="420.5" font-size="15" fill="#6e5a84" stroke="#fff" stroke-opacity="0.75" stroke-width="2" paint-order="stroke" textLength="56.2" lengthAdjust="spacingAndGlyphs">Северна</text>
<text x="279.6" y="436.0" font-size="15" fill="#6e5a84" stroke="#fff" stroke-opacity="0.75" stroke-width="2" paint-order="stroke" textLength="79.3" lengthAdjust="spacingAndGlyphs">Македонија</text>
<text x="613.4" y="290.0" font-size="15" fill="#6e5a84" stroke="#fff" stroke-opacity="0.75" stroke-width="2" paint-order="stroke" textLength="63.4" lengthAdjust="spacingAndGlyphs">България</text>
<circle cx="351" cy="118" r="2.2" fill="#fff" stroke="#555" stroke-width="1"/>
<text x="341.0" y="114.2" font-size="11.2" fill="#333" stroke="#fff" stroke-opacity="0.75" stroke-width="2" paint-order="stroke" textLength="18.0" lengthAdjust="spacingAndGlyphs">Бор</text>
<circle cx="367" cy="139.7" r="2.2" fill="#fff" stroke="#555" stroke-width="1"/>
<text x="348.0" y="136.6" font-size="11.2" fill="#333" stroke="#fff" stroke-opacity="0.75" stroke-width="2" paint-order="stroke" textLength="37.0" lengthAdjust="spacingAndGlyphs">Зајечар</text>
<circle cx="421" cy="129.9" r="2.2" fill="#fff" stroke="#555" stroke-width="1"/>
<text x="406.0" y="141.1" font-size="11.2" fill="#333" stroke="#fff" stroke-opacity="0.75" stroke-width="2" paint-order="stroke" textLength="30.0" lengthAdjust="spacingAndGlyphs">Видин</text>
<text x="239.0" y="122.3" font-size="11.2" fill="#333" stroke="#fff" stroke-opacity="0.75" stroke-width="2" paint-order="stroke" textLength="30.0" lengthAdjust="spacingAndGlyphs">ујевац</text>
<circle cx="331.3" cy="213.6" r="2.2" fill="#fff" stroke="#555" stroke-width="1"/>
<text x="321.0" y="209.8" font-size="11.2" fill="#333" stroke="#fff" stroke-opacity="0.75" stroke-width="2" paint-order="stroke" textLength="22.0" lengthAdjust="spacingAndGlyphs">Ниш</text>
<circle cx="394" cy="233.9" r="2.2" fill="#fff" stroke="#555" stroke-width="1"/>
<text x="380.0" y="230.8" font-size="11.2" fill="#333" stroke="#fff" stroke-opacity="0.75" stroke-width="2" paint-order="stroke" textLength="30.0" lengthAdjust="spacingAndGlyphs">Пирот</text>
<circle cx="303.8" cy="224" r="2.2" fill="#fff" stroke="#555" stroke-width="1"/>
<text x="279.3" y="236.8" font-size="11.2" fill="#333" stroke="#fff" stroke-opacity="0.75" stroke-width="2" paint-order="stroke" textLength="50.0" lengthAdjust="spacingAndGlyphs">Прокупље</text>
<circle cx="336.7" cy="254" r="2.2" fill="#fff" stroke="#555" stroke-width="1"/>
<text x="313.3" y="266.7" font-size="11.2" fill="#333" stroke="#fff" stroke-opacity="0.75" stroke-width="2" paint-order="stroke" textLength="47.0" lengthAdjust="spacingAndGlyphs">Лесковац</text>
<text x="239.0" y="265.2" font-size="11.2" fill="#333" stroke="#fff" stroke-opacity="0.75" stroke-width="2" paint-order="stroke" textLength="20.0" lengthAdjust="spacingAndGlyphs">ovicë</text>
<circle cx="332" cy="309" r="2.2" fill="#fff" stroke="#555" stroke-width="1"/>
<text x="316.0" y="304.7" font-size="11.2" fill="#333" stroke="#fff" stroke-opacity="0.75" stroke-width="2" paint-order="stroke" textLength="32.0" lengthAdjust="spacingAndGlyphs">Врање</text>
<circle cx="292.8" cy="319.3" r="2.2" fill="#fff" stroke="#555" stroke-width="1"/>
<text x="280.0" y="315.9" font-size="11.2" fill="#333" stroke="#fff" stroke-opacity="0.75" stroke-width="2" paint-order="stroke" textLength="26.0" lengthAdjust="spacingAndGlyphs">Gjilan</text>
<circle cx="263.9" cy="332" r="2.2" fill="#fff" stroke="#555" stroke-width="1"/>
<text x="249.2" y="345.4" font-size="11.2" fill="#333" stroke="#fff" stroke-opacity="0.75" stroke-width="2" paint-order="stroke" textLength="30.0" lengthAdjust="spacingAndGlyphs">Ferizaj</text>
<circle cx="378.5" cy="386.8" r="2.2" fill="#fff" stroke="#555" stroke-width="1"/>
<text x="361.7" y="382.5" font-size="11.2" fill="#333" stroke="#fff" stroke-opacity="0.75" stroke-width="2" paint-order="stroke" textLength="35.0" lengthAdjust="spacingAndGlyphs">Кочани</text>
<text x="239.0" y="387.6" font-size="11.2" fill="#333" stroke="#fff" stroke-opacity="0.75" stroke-width="2" paint-order="stroke" textLength="26.0" lengthAdjust="spacingAndGlyphs">етово</text>
<text x="239.0" y="414.3" font-size="11.2" fill="#333" stroke="#fff" stroke-opacity="0.75" stroke-width="2" paint-order="stroke" textLength="25.0" lengthAdjust="spacingAndGlyphs">ивар</text>
<text x="239.0" y="432.6" font-size="11.2" fill="#333" stroke="#fff" stroke-opacity="0.75" stroke-width="2" paint-order="stroke" textLength="26.0" lengthAdjust="spacingAndGlyphs">чево</text>
<circle cx="440.4" cy="376" r="2.2" fill="#fff" stroke="#555" stroke-width="1"/>
<text x="410.0" y="373.0" font-size="11.2" fill="#333" stroke="#fff" stroke-opacity="0.75" stroke-width="2" paint-order="stroke" textLength="61.0" lengthAdjust="spacingAndGlyphs">Благоевград</text>
<circle cx="451" cy="450.6" r="2.2" fill="#fff" stroke="#555" stroke-width="1"/>
<text x="455.8" y="455.1" font-size="11.2" fill="#333" stroke="#fff" stroke-opacity="0.75" stroke-width="2" paint-order="stroke" textLength="35.0" lengthAdjust="spacingAndGlyphs">Петрич</text>
<circle cx="553.5" cy="353.8" r="2.2" fill="#fff" stroke="#555" stroke-width="1"/>
<text x="495.2" y="358.1" font-size="11.2" fill="#333" stroke="#fff" stroke-opacity="0.75" stroke-width="2" paint-order="stroke" textLength="52.0" lengthAdjust="spacingAndGlyphs">Пазарджик</text>
<circle cx="602.8" cy="375" r="2.2" fill="#fff" stroke="#555" stroke-width="1"/>
<text x="575.0" y="372.9" font-size="11.2" fill="#333" stroke="#fff" stroke-opacity="0.75" stroke-width="2" paint-order="stroke" textLength="57.0" lengthAdjust="spacingAndGlyphs">Асеновград</text>
<circle cx="665" cy="384.9" r="2.2" fill="#fff" stroke="#555" stroke-width="1"/>
<text x="646.0" y="381.8" font-size="11.2" fill="#333" stroke="#fff" stroke-opacity="0.75" stroke-width="2" paint-order="stroke" textLength="38.5" lengthAdjust="spacingAndGlyphs">Хасково</text>
<circle cx="755.5" cy="416.5" r="2.2" fill="#fff" stroke="#555" stroke-width="1"/>
<text x="741.3" y="427.7" font-size="11.2" fill="#333" stroke="#fff" stroke-opacity="0.75" stroke-width="2" paint-order="stroke" textLength="30.0" lengthAdjust="spacingAndGlyphs">Edirne</text>
<circle cx="816.8" cy="408.5" r="2.2" fill="#fff" stroke="#555" stroke-width="1"/>
<text x="796.0" y="405.5" font-size="11.2" fill="#333" stroke="#fff" stroke-opacity="0.75" stroke-width="2" paint-order="stroke" textLength="41.5" lengthAdjust="spacingAndGlyphs">Kırklareli</text>
<circle cx="651" cy="299.6" r="2.2" fill="#fff" stroke="#555" stroke-width="1"/>
<text x="627.3" y="311.7" font-size="11.2" fill="#333" stroke="#fff" stroke-opacity="0.75" stroke-width="2" paint-order="stroke" textLength="46.0" lengthAdjust="spacingAndGlyphs">Казанлък</text>
<circle cx="751.7" cy="317.4" r="2.2" fill="#fff" stroke="#555" stroke-width="1"/>
<text x="756.0" y="321.1" font-size="11.2" fill="#333" stroke="#fff" stroke-opacity="0.75" stroke-width="2" paint-order="stroke" textLength="31.0" lengthAdjust="spacingAndGlyphs">Ямбол</text>
<circle cx="647" cy="176.8" r="2.2" fill="#fff" stroke="#555" stroke-width="1"/>
<text x="626.7" y="188.1" font-size="11.2" fill="#333" stroke="#fff" stroke-opacity="0.75" stroke-width="2" paint-order="stroke" textLength="39.5" lengthAdjust="spacingAndGlyphs">Свищов</text>
<circle cx="753" cy="188.2" r="2.2" fill="#fff" stroke="#555" stroke-width="1"/>
<text x="734.4" y="200.0" font-size="11.2" fill="#333" stroke="#fff" stroke-opacity="0.75" stroke-width="2" paint-order="stroke" textLength="37.4" lengthAdjust="spacingAndGlyphs">Разград</text>
<circle cx="757.7" cy="222" r="2.2" fill="#fff" stroke="#555" stroke-width="1"/>
<text x="729.9" y="233.8" font-size="11.2" fill="#333" stroke="#fff" stroke-opacity="0.75" stroke-width="2" paint-order="stroke" textLength="54.7" lengthAdjust="spacingAndGlyphs">Търговище</text>
<circle cx="671.6" cy="243" r="2.2" fill="#fff" stroke="#555" stroke-width="1"/>
<text x="655.0" y="254.8" font-size="11.2" fill="#333" stroke="#fff" stroke-opacity="0.75" stroke-width="2" paint-order="stroke" textLength="34.5" lengthAdjust="spacingAndGlyphs">Велико</text>
<text x="651.2" y="266.8" font-size="11.2" fill="#333" stroke="#fff" stroke-opacity="0.75" stroke-width="2" paint-order="stroke" textLength="42.0" lengthAdjust="spacingAndGlyphs">Търново</text>
<circle cx="701" cy="148" r="2.2" fill="#fff" stroke="#555" stroke-width="1"/>
<text x="691.0" y="143.2" font-size="11.2" fill="#333" stroke="#fff" stroke-opacity="0.75" stroke-width="2" paint-order="stroke" textLength="21.0" lengthAdjust="spacingAndGlyphs">Русе</text>
<circle cx="826.5" cy="102.4" r="2.2" fill="#fff" stroke="#555" stroke-width="1"/>
<text x="807.6" y="115.1" font-size="11.2" fill="#333" stroke="#fff" stroke-opacity="0.75" stroke-width="2" paint-order="stroke" textLength="37.4" lengthAdjust="spacingAndGlyphs">Călărași</text>
<circle cx="941" cy="150.6" r="2.2" fill="#fff" stroke="#555" stroke-width="1"/>
<text x="919.8" y="163.9" font-size="11.2" fill="#333" stroke="#fff" stroke-opacity="0.75" stroke-width="2" paint-order="stroke" textLength="42.2" lengthAdjust="spacingAndGlyphs">Mangalia</text>
<circle cx="876" cy="226" r="2.2" fill="#fff" stroke="#555" stroke-width="1"/>
<text x="887.7" y="231.6" font-size="11.2" fill="#333" stroke="#fff" stroke-opacity="0.75" stroke-width="2" paint-order="stroke" textLength="26.0" lengthAdjust="spacingAndGlyphs">Варна</text>
<circle cx="481.6" cy="227" r="2.2" fill="#fff" stroke="#555" stroke-width="1"/>
<text x="467.6" y="224.8" font-size="11.2" fill="#333" stroke="#fff" stroke-opacity="0.75" stroke-width="2" paint-order="stroke" textLength="30.0" lengthAdjust="spacingAndGlyphs">Враца</text>
<circle cx="290" cy="378.4" r="2.2" fill="#fff" stroke="#555" stroke-width="1"/>
<text x="271.2" y="371.3" font-size="15" fill="#333" stroke="#fff" stroke-opacity="0.75" stroke-width="2" paint-order="stroke" textLength="37.0" lengthAdjust="spacingAndGlyphs">Скопје</text>
<circle cx="459" cy="292" r="2.2" fill="#fff" stroke="#555" stroke-width="1"/>
<text x="443.7" y="284.6" font-size="11.2" fill="#333" stroke="#fff" stroke-opacity="0.75" stroke-width="2" paint-order="stroke" textLength="36.0" lengthAdjust="spacingAndGlyphs">София</text>
<circle cx="533" cy="213" r="14.9" fill="url(#low)"/>
<circle cx="621" cy="251" r="13.8" fill="url(#low)"/>
<circle cx="721" cy="207" r="13.8" fill="url(#low)"/>
<circle cx="803" cy="144" r="13.8" fill="url(#low)"/>
<circle cx="790" cy="270" r="14.9" fill="url(#low)"/>
<circle cx="815" cy="257" r="13.8" fill="url(#low)"/>
<circle cx="866" cy="276" r="14.9" fill="url(#low)"/>
<circle cx="834" cy="289" r="13.8" fill="url(#low)"/>
<circle cx="784" cy="201" r="12.6" fill="url(#low)"/>
<circle cx="590" cy="276" r="13.8" fill="url(#low)"/>
<circle cx="508" cy="270" r="13.8" fill="url(#low)"/>
<circle cx="539" cy="326" r="14.9" fill="url(#low)"/>
<circle cx="520" cy="358" r="17.2" fill="url(#low)"/>
<circle cx="552" cy="352" r="14.9" fill="url(#low)"/>
<circle cx="608" cy="383" r="13.8" fill="url(#low)"/>
<circle cx="715" cy="396" r="13.8" fill="url(#low)"/>
<circle cx="590" cy="414" r="13.8" fill="url(#low)"/>
<circle cx="476" cy="396" r="16.1" fill="url(#low)"/>
<circle cx="502" cy="427" r="14.9" fill="url(#low)"/>
<circle cx="451" cy="427" r="14.9" fill="url(#low)"/>
<circle cx="445" cy="452" r="13.8" fill="url(#low)"/>
<circle cx="451" cy="151" r="13.8" fill="url(#low)"/>
<circle cx="460" cy="290" r="25.0" fill="url(#hot)"/>
<circle cx="877.3" cy="227.3" r="20.0" fill="url(#hot2)"/>
<circle cx="589" cy="357" r="18.0" fill="url(#hot2)"/>
<circle cx="837" cy="313" r="17.0" fill="url(#mid)"/>
<circle cx="701" cy="148" r="15.0" fill="url(#mid)"/>
<circle cx="576" cy="200" r="14.0" fill="url(#mid)"/>
<circle cx="417" cy="128" r="14.0" fill="url(#midb)"/>
<circle cx="733" cy="293" r="14.0" fill="url(#mid)"/>
<circle cx="748" cy="318" r="16.1" fill="url(#midl)"/>
<circle cx="553" cy="353" r="15.0" fill="url(#mid)"/>
<circle cx="666" cy="377" r="16.1" fill="url(#midl)"/>
<circle cx="647" cy="418" r="16.1" fill="url(#midl)"/>
<circle cx="870" cy="178" r="14.9" fill="url(#midl)"/>
<circle cx="671" cy="243" r="14.9" fill="url(#midl)"/>
<circle cx="669" cy="322" r="14.9" fill="url(#midl)"/>
<circle cx="440" cy="372" r="14.9" fill="url(#midl)"/>
<circle cx="455" cy="450" r="16.1" fill="url(#low)"/>
<circle cx="453" cy="192" r="14.9" fill="url(#low)"/>
<circle cx="481" cy="224" r="14.9" fill="url(#low)"/>
<circle cx="404" cy="340" r="14.9" fill="url(#low)"/>
<circle cx="753" cy="188" r="14.9" fill="url(#low)"/>
<circle cx="779" cy="218" r="14.9" fill="url(#midl)"/>
<circle cx="757" cy="222" r="13.8" fill="url(#low)"/>
<circle cx="815" cy="110" r="13.8" fill="url(#low)"/>
<circle cx="586" cy="237" r="14.9" fill="url(#low)"/>
<circle cx="640" cy="268" r="14.9" fill="url(#low)"/>
<circle cx="651" cy="300" r="13.8" fill="url(#low)"/>
<circle cx="583" cy="420" r="13.8" fill="url(#low)"/>
<circle cx="432" cy="302" r="19.5" fill="url(#midl)"/>
<circle cx="500" cy="290" r="13.8" fill="url(#low)"/>
<circle cx="460" cy="318" r="13.8" fill="url(#low)"/>
<circle cx="470" cy="410" r="14.9" fill="url(#low)"/>
<circle cx="500" cy="430" r="13.8" fill="url(#low)"/>
<circle cx="530" cy="375" r="14.9" fill="url(#low)"/>
<circle cx="600" cy="390" r="13.8" fill="url(#low)"/>
<circle cx="690" cy="455" r="11.5" fill="url(#low)"/>
<circle cx="720" cy="385" r="13.8" fill="url(#low)"/>
<circle cx="790" cy="260" r="13.8" fill="url(#low)"/>
<circle cx="850" cy="265" r="14.9" fill="url(#low)"/>
<circle cx="700" cy="200" r="13.8" fill="url(#low)"/>
<circle cx="620" cy="200" r="11.5" fill="url(#low)"/>
<circle cx="520" cy="190" r="11.5" fill="url(#low)"/>
<circle cx="900" cy="130" r="11.5" fill="url(#low)"/>
<circle cx="830" cy="205" r="11.5" fill="url(#low)"/>
<circle cx="760" cy="350" r="12.6" fill="url(#low)"/>
<circle cx="555" cy="275" r="13.8" fill="url(#low)"/>
<circle cx="640" cy="290" r="11.5" fill="url(#low)"/>
<circle cx="440" cy="170" r="11.5" fill="url(#low)"/>
<circle cx="540" cy="230" r="11.5" fill="url(#low)"/>
<circle cx="400" cy="460" r="11.5" fill="url(#low)"/>
<circle cx="720" cy="440" r="10.3" fill="url(#low)"/>
<circle cx="880" cy="300" r="11.5" fill="url(#low)"/>
<rect x="959.1" y="94.2" width="65.8" height="33.6" fill="#323232"/>
<path d="M969.05,118.71 L969.05,110.93 L968.46,110.63 L971.45,107.64 L971.45,103.16 L973.54,103.16 L973.54,105.85 L975.93,103.46 L983.71,110.63 L982.81,111.23 L982.81,118.71 L978.33,118.71 L978.33,113.03 L973.84,113.03 L973.84,118.71 Z" fill="none" stroke="#cacaca" stroke-width="0.95" stroke-linejoin="miter"/>
<rect x="1001.3" y="103.3" width="2.5" height="2.5" fill="none" stroke="#cacaca" stroke-width="0.9"/><circle cx="1002.55" cy="104.55" r="0.5" fill="#cacaca"/>
<circle cx="1002.55" cy="108.5" r="1.25" fill="none" stroke="#cacaca" stroke-width="0.9"/>
<rect x="1001.3" y="111.3" width="2.5" height="2.5" fill="none" stroke="#cacaca" stroke-width="0.9"/><circle cx="1002.55" cy="112.55" r="0.5" fill="#cacaca"/>
<path d="M1001.1,117.6 L1002.55,115.2 L1004,117.6 Z" fill="none" stroke="#cacaca" stroke-width="0.9"/>
<line x1="1006.1" y1="104.5" x2="1014.8" y2="104.5" stroke="#cacaca" stroke-width="1.1"/>
<line x1="1006.1" y1="108.4" x2="1014.8" y2="108.4" stroke="#cacaca" stroke-width="1.1"/>
<line x1="1006.1" y1="112.5" x2="1014.8" y2="112.5" stroke="#cacaca" stroke-width="1.1"/>
<line x1="1006.1" y1="116.4" x2="1014.8" y2="116.4" stroke="#cacaca" stroke-width="1.1"/>
<rect x="994" y="384" width="31" height="58" fill="#323232"/>
<line x1="1003.3" y1="399" x2="1015.8" y2="399" stroke="#c4c4c4" stroke-width="1.8"/><line x1="1009.5" y1="393" x2="1009.5" y2="405" stroke="#c4c4c4" stroke-width="1.8"/>
<line x1="1003.3" y1="426" x2="1015.8" y2="426" stroke="#c4c4c4" stroke-width="1.8"/>
<rect x="705.8" y="447.9" width="315.2" height="13.4" fill="#ffffff" fill-opacity="0.72"/>
<text x="709.7" y="458.4" font-size="12" fill="#333" textLength="308.2" lengthAdjust="spacingAndGlyphs">Map data © OpenStreetMap contributors, CC-BY-SA</text>
</svg></div>

<!-- nav bar -->
<div class="pnl" style="left:249px;top:466px;width:773px;height:30px"></div>
<div class="t" style="left:538px;top:474.3px;font-size:12.8px;color:#c8c8c8">Концентрация на карантинирани</div>

<!-- chart panel -->
<div class="pnl" style="left:238px;top:507px;width:795px;height:133px"></div>
<div class="t" style="left:244px;top:516.7px;font-size:14.6px;color:#cfcfcf">Брой заболели по дни</div>
<svg class="a" style="left:239px;top:540px" width="793" height="99" viewBox="239 540 793 99">
<line x1="288.7" y1="559.5" x2="1001" y2="559.5" stroke="#4d4d4d" stroke-width="1" stroke-dasharray="4 4"/>
<line x1="288.7" y1="575.5" x2="1001" y2="575.5" stroke="#4d4d4d" stroke-width="1" stroke-dasharray="4 4"/>
<line x1="288.7" y1="591.5" x2="1001" y2="591.5" stroke="#4d4d4d" stroke-width="1" stroke-dasharray="4 4"/>
<line x1="358.6" y1="559.5" x2="358.6" y2="607.5" stroke="#4d4d4d" stroke-width="1" stroke-dasharray="4 4"/>
<line x1="358.6" y1="607.5" x2="358.6" y2="612" stroke="#7a7a7a" stroke-width="1"/>
<line x1="446.3" y1="559.5" x2="446.3" y2="607.5" stroke="#4d4d4d" stroke-width="1" stroke-dasharray="4 4"/>
<line x1="446.3" y1="607.5" x2="446.3" y2="612" stroke="#7a7a7a" stroke-width="1"/>
<line x1="537.0" y1="559.5" x2="537.0" y2="607.5" stroke="#4d4d4d" stroke-width="1" stroke-dasharray="4 4"/>
<line x1="537.0" y1="607.5" x2="537.0" y2="612" stroke="#7a7a7a" stroke-width="1"/>
<line x1="624.4" y1="559.5" x2="624.4" y2="607.5" stroke="#4d4d4d" stroke-width="1" stroke-dasharray="4 4"/>
<line x1="624.4" y1="607.5" x2="624.4" y2="612" stroke="#7a7a7a" stroke-width="1"/>
<line x1="715.2" y1="559.5" x2="715.2" y2="607.5" stroke="#4d4d4d" stroke-width="1" stroke-dasharray="4 4"/>
<line x1="715.2" y1="607.5" x2="715.2" y2="612" stroke="#7a7a7a" stroke-width="1"/>
<line x1="806.5" y1="559.5" x2="806.5" y2="607.5" stroke="#4d4d4d" stroke-width="1" stroke-dasharray="4 4"/>
<line x1="806.5" y1="607.5" x2="806.5" y2="612" stroke="#7a7a7a" stroke-width="1"/>
<line x1="894.6" y1="559.5" x2="894.6" y2="607.5" stroke="#4d4d4d" stroke-width="1" stroke-dasharray="4 4"/>
<line x1="894.6" y1="607.5" x2="894.6" y2="612" stroke="#7a7a7a" stroke-width="1"/>
<line x1="984.6" y1="559.5" x2="984.6" y2="607.5" stroke="#4d4d4d" stroke-width="1" stroke-dasharray="4 4"/>
<line x1="984.6" y1="607.5" x2="984.6" y2="612" stroke="#7a7a7a" stroke-width="1"/>
<polygon points="288.4,607.5 288.4,607.5 291.3,607.5 291.3,607.5 294.2,607.5 294.2,607.5 297.2,607.5 297.2,607.5 300.1,607.5 300.1,607.4 303.0,607.4 303.0,607.4 305.9,607.4 305.9,607.4 308.9,607.4 308.9,607.4 311.8,607.4 311.8,607.4 314.7,607.4 314.7,607.4 317.6,607.4 317.6,607.4 320.6,607.4 320.6,607.4 323.5,607.4 323.5,607.2 326.4,607.2 326.4,607.3 329.3,607.3 329.3,607.4 332.3,607.4 332.3,607.2 335.2,607.2 335.2,607.2 338.1,607.2 338.1,607.3 341.0,607.3 341.0,607.3 344.0,607.3 344.0,607.3 346.9,607.3 346.9,607.4 349.8,607.4 349.8,607.4 352.8,607.4 352.8,607.4 355.7,607.4 355.7,607.1 358.6,607.1 358.6,607.2 361.5,607.2 361.5,607.3 364.4,607.3 364.4,607.1 367.4,607.1 367.4,607.3 370.3,607.3 370.3,607.1 373.2,607.1 373.2,607.2 376.1,607.2 376.1,607.3 379.1,607.3 379.1,607.1 382.0,607.1 382.0,607.3 384.9,607.3 384.9,607.1 387.8,607.1 387.8,607.3 390.8,607.3 390.8,607.3 393.7,607.3 393.7,607.1 396.6,607.1 396.6,607.0 399.5,607.0 399.5,607.2 402.5,607.2 402.5,607.2 405.4,607.2 405.4,607.1 408.3,607.1 408.3,606.9 411.2,606.9 411.2,607.1 414.2,607.1 414.2,607.1 417.1,607.1 417.1,606.9 420.0,606.9 420.0,607.3 422.9,607.3 422.9,606.9 425.9,606.9 425.9,607.2 428.8,607.2 428.8,607.2 431.7,607.2 431.7,607.2 434.6,607.2 434.6,607.1 437.6,607.1 437.6,606.9 440.5,606.9 440.5,607.2 443.4,607.2 443.4,607.0 446.3,607.0 446.3,607.2 449.3,607.2 449.3,607.3 452.2,607.3 452.2,607.2 455.1,607.2 455.1,607.4 458.0,607.4 458.0,607.4 461.0,607.4 461.0,607.3 463.9,607.3 463.9,607.2 466.8,607.2 466.8,607.3 469.8,607.3 469.8,607.3 472.7,607.3 472.7,607.2 475.6,607.2 475.6,607.3 478.5,607.3 478.5,607.3 481.4,607.3 481.4,607.2 484.4,607.2 484.4,607.2 487.3,607.2 487.3,607.3 490.2,607.3 490.2,607.2 493.1,607.2 493.1,607.2 496.1,607.2 496.1,607.1 499.0,607.1 499.0,607.2 501.9,607.2 501.9,607.3 504.8,607.3 504.8,607.1 507.8,607.1 507.8,607.4 510.7,607.4 510.7,607.3 513.6,607.3 513.6,607.2 516.5,607.2 516.5,607.3 519.5,607.3 519.5,607.3 522.4,607.3 522.4,607.4 525.3,607.4 525.3,607.2 528.2,607.2 528.2,607.2 531.2,607.2 531.2,607.2 534.1,607.2 534.1,607.2 537.0,607.2 537.0,607.3 539.9,607.3 539.9,607.2 542.9,607.2 542.9,607.2 545.8,607.2 545.8,607.1 548.7,607.1 548.7,607.1 551.6,607.1 551.6,607.0 554.6,607.0 554.6,606.9 557.5,606.9 557.5,607.1 560.4,607.1 560.4,606.9 563.3,606.9 563.3,607.1 566.3,607.1 566.3,606.9 569.2,606.9 569.2,606.9 572.1,606.9 572.1,606.7 575.0,606.7 575.0,606.7 578.0,606.7 578.0,606.9 580.9,606.9 580.9,606.8 583.8,606.8 583.8,606.7 586.8,606.7 586.8,607.0 589.7,607.0 589.7,606.7 592.6,606.7 592.6,606.9 595.5,606.9 595.5,606.9 598.4,606.9 598.4,606.9 601.4,606.9 601.4,606.4 604.3,606.4 604.3,606.8 607.2,606.8 607.2,606.7 610.1,606.7 610.1,606.5 613.1,606.5 613.1,606.2 616.0,606.2 616.0,606.7 618.9,606.7 618.9,606.4 621.8,606.4 621.8,606.3 624.8,606.3 624.8,605.7 627.7,605.7 627.7,605.7 630.6,605.7 630.6,605.6 633.5,605.6 633.5,606.1 636.5,606.1 636.5,606.0 639.4,606.0 639.4,606.0 642.3,606.0 642.3,605.4 645.2,605.4 645.2,605.3 648.2,605.3 648.2,606.1 651.1,606.1 651.1,606.0 654.0,606.0 654.0,606.0 656.9,606.0 656.9,605.9 659.9,605.9 659.9,605.6 662.8,605.6 662.8,605.5 665.7,605.5 665.7,605.9 668.6,605.9 668.6,606.2 671.6,606.2 671.6,605.7 674.5,605.7 674.5,605.7 677.4,605.7 677.4,605.5 680.3,605.5 680.3,605.1 683.3,605.1 683.3,605.4 686.2,605.4 686.2,605.6 689.1,605.6 689.1,605.5 692.0,605.5 692.0,605.5 695.0,605.5 695.0,606.2 697.9,606.2 697.9,605.3 700.8,605.3 700.8,605.5 703.8,605.5 703.8,605.4 706.7,605.4 706.7,605.6 709.6,605.6 709.6,606.0 712.5,606.0 712.5,606.0 715.4,606.0 715.4,606.4 718.4,606.4 718.4,605.9 721.3,605.9 721.3,606.5 724.2,606.5 724.2,606.5 727.1,606.5 727.1,606.3 730.1,606.3 730.1,606.4 733.0,606.4 733.0,606.2 735.9,606.2 735.9,606.5 738.8,606.5 738.8,606.6 741.8,606.6 741.8,606.5 744.7,606.5 744.7,606.5 747.6,606.5 747.6,606.3 750.5,606.3 750.5,606.6 753.5,606.6 753.5,605.8 756.4,605.8 756.4,606.1 759.3,606.1 759.3,606.5 762.2,606.5 762.2,606.5 765.2,606.5 765.2,606.4 768.1,606.4 768.1,606.4 771.0,606.4 771.0,606.6 773.9,606.6 773.9,606.0 776.9,606.0 776.9,605.9 779.8,605.9 779.8,606.4 782.7,606.4 782.7,606.4 785.6,606.4 785.6,606.7 788.6,606.7 788.6,606.7 791.5,606.7 791.5,606.5 794.4,606.5 794.4,606.6 797.3,606.6 797.3,606.2 800.3,606.2 800.3,606.7 803.2,606.7 803.2,606.8 806.1,606.8 806.1,606.2 809.0,606.2 809.0,606.5 812.0,606.5 812.0,606.8 814.9,606.8 814.9,606.5 817.8,606.5 817.8,606.9 820.8,606.9 820.8,606.4 823.7,606.4 823.7,606.0 826.6,606.0 826.6,606.1 829.5,606.1 829.5,606.2 832.4,606.2 832.4,606.6 835.4,606.6 835.4,606.5 838.3,606.5 838.3,606.7 841.2,606.7 841.2,606.1 844.1,606.1 844.1,606.3 847.1,606.3 847.1,606.1 850.0,606.1 850.0,606.5 852.9,606.5 852.9,606.6 855.8,606.6 855.8,606.0 858.8,606.0 858.8,605.8 861.7,605.8 861.7,605.9 864.6,605.9 864.6,605.9 867.5,605.9 867.5,605.9 870.5,605.9 870.5,605.9 873.4,605.9 873.4,606.5 876.3,606.5 876.3,606.1 879.2,606.1 879.2,606.3 882.2,606.3 882.2,606.6 885.1,606.6 885.1,606.6 888.0,606.6 888.0,606.3 890.9,606.3 890.9,606.4 893.9,606.4 893.9,605.5 896.8,605.5 896.8,605.9 899.7,605.9 899.7,605.1 902.6,605.1 902.6,606.3 905.6,606.3 905.6,606.1 908.5,606.1 908.5,604.9 911.4,604.9 911.4,604.3 914.3,604.3 914.3,603.1 917.3,603.1 917.3,602.7 920.2,602.7 920.2,602.3 923.1,602.3 923.1,603.9 926.0,603.9 926.0,604.7 929.0,604.7 929.0,601.5 931.9,601.5 931.9,600.7 934.8,600.7 934.8,600.3 937.7,600.3 937.7,601.1 940.7,601.1 940.7,601.9 943.6,601.9 943.6,603.5 946.5,603.5 946.5,601.1 949.4,601.1 949.4,597.9 952.4,597.9 952.4,597.1 955.3,597.1 955.3,595.9 958.2,595.9 958.2,595.5 961.1,595.5 961.1,595.9 964.1,595.9 964.1,599.5 967.0,599.5 967.0,597.1 969.9,597.1 969.9,588.3 972.8,588.3 972.8,587.5 975.8,587.5 975.8,585.9 978.7,585.9 978.7,586.7 981.6,586.7 981.6,590.7 984.5,590.7 984.5,597.9 987.5,597.9 987.5,595.5 990.4,595.5 990.4,593.9 993.3,593.9 993.3,575.2 996.2,575.2 996.2,575.1 999.2,575.1 999.2,607.5" fill="#ffaa00"/>
<line x1="288.7" y1="607.5" x2="1001" y2="607.5" stroke="#ffaa00" stroke-width="1"/>
<line x1="288.7" y1="559" x2="288.7" y2="608" stroke="#7a7a7a" stroke-width="1"/>
<line x1="282.5" y1="559.5" x2="288.7" y2="559.5" stroke="#7a7a7a" stroke-width="1"/>
<text x="276" y="563.4" font-size="10.4" fill="#b0b0b0" text-anchor="end">6k</text>
<line x1="282.5" y1="575.5" x2="288.7" y2="575.5" stroke="#7a7a7a" stroke-width="1"/>
<text x="276" y="579.4" font-size="10.4" fill="#b0b0b0" text-anchor="end">4k</text>
<line x1="282.5" y1="591.5" x2="288.7" y2="591.5" stroke="#7a7a7a" stroke-width="1"/>
<text x="276" y="595.4" font-size="10.4" fill="#b0b0b0" text-anchor="end">2k</text>
<line x1="282.5" y1="607.5" x2="288.7" y2="607.5" stroke="#7a7a7a" stroke-width="1"/>
<text x="276" y="611.4" font-size="10.4" fill="#b0b0b0" text-anchor="end">0</text>
<g font-size="10.8" font-weight="700" fill="#b9b9b9" stroke="#262626" stroke-width="1.1" paint-order="stroke" text-anchor="middle"><text x="289.9" y="603.1">4</text><text x="292.8" y="603.1">0</text><text x="295.7" y="603.1">2</text><text x="298.6" y="603.1">1</text><text x="301.6" y="603.0">16</text><text x="304.5" y="603.0">8</text><text x="307.4" y="603.0">10</text><text x="310.3" y="603.0">16</text><text x="313.3" y="603.0">16</text><text x="316.2" y="603.0">11</text><text x="319.1" y="603.0">13</text><text x="322.0" y="603.0">12</text><text x="325.0" y="602.8">38</text><text x="327.9" y="602.9">20</text><text x="330.8" y="603.0">14</text><text x="333.7" y="602.8">38</text><text x="336.7" y="602.8">43</text><text x="339.6" y="602.9">22</text><text x="342.5" y="602.9">22</text><text x="345.4" y="602.9">30</text><text x="348.4" y="603.0">18</text><text x="351.3" y="603.0">17</text><text x="354.2" y="603.0">14</text><text x="357.1" y="602.7">44</text><text x="360.1" y="602.8">37</text><text x="363.0" y="602.9">31</text><text x="365.9" y="602.7">51</text><text x="368.8" y="602.9">28</text><text x="371.8" y="602.7">47</text><text x="374.7" y="602.8">41</text><text x="377.6" y="602.9">28</text><text x="380.5" y="602.7">47</text><text x="383.5" y="602.9">27</text><text x="386.4" y="602.7">45</text><text x="389.3" y="602.9">29</text><text x="392.2" y="602.9">30</text><text x="395.2" y="602.7">45</text><text x="398.1" y="602.6">63</text><text x="401.0" y="602.8">32</text><text x="403.9" y="602.8">37</text><text x="406.9" y="602.7">56</text><text x="409.8" y="602.5">71</text><text x="412.7" y="602.7">54</text><text x="415.6" y="602.7">46</text><text x="418.6" y="602.5">73</text><text x="421.5" y="602.9">30</text><text x="424.4" y="602.5">69</text><text x="427.3" y="602.8">42</text><text x="430.3" y="602.8">36</text><text x="433.2" y="602.8">34</text><text x="436.1" y="602.7">44</text><text x="439.0" y="602.5">69</text><text x="442.0" y="602.8">38</text><text x="444.9" y="602.6">58</text><text x="447.8" y="602.8">40</text><text x="450.7" y="602.9">29</text><text x="453.7" y="602.8">36</text><text x="456.6" y="603.0">17</text><text x="459.5" y="603.0">17</text><text x="462.4" y="602.9">23</text><text x="465.4" y="602.8">40</text><text x="468.3" y="602.9">31</text><text x="471.2" y="602.9">26</text><text x="474.1" y="602.8">36</text><text x="477.1" y="602.9">31</text><text x="480.0" y="602.9">25</text><text x="482.9" y="602.8">43</text><text x="485.8" y="602.8">40</text><text x="488.8" y="602.9">23</text><text x="491.7" y="602.8">35</text><text x="494.6" y="602.8">33</text><text x="497.5" y="602.7">45</text><text x="500.5" y="602.8">40</text><text x="503.4" y="602.9">24</text><text x="506.3" y="602.7">48</text><text x="509.2" y="603.0">18</text><text x="512.2" y="602.9">28</text><text x="515.1" y="602.8">40</text><text x="518.0" y="602.9">19</text><text x="520.9" y="602.9">30</text><text x="523.9" y="603.0">15</text><text x="526.8" y="602.8">36</text><text x="529.7" y="602.8">39</text><text x="532.6" y="602.8">32</text><text x="535.6" y="602.8">42</text><text x="538.5" y="602.9">26</text><text x="541.4" y="602.8">38</text><text x="544.3" y="602.8">40</text><text x="547.3" y="602.7">44</text><text x="550.2" y="602.7">44</text><text x="553.1" y="602.6">61</text><text x="556.0" y="602.5">70</text><text x="559.0" y="602.7">56</text><text x="561.9" y="602.5">69</text><text x="564.8" y="602.7">45</text><text x="567.7" y="602.5">79</text><text x="570.7" y="602.5">81</text><text x="573.6" y="602.3">104</text><text x="576.5" y="602.3">100</text><text x="579.4" y="602.5">73</text><text x="582.4" y="602.4">82</text><text x="585.3" y="602.3">105</text><text x="588.2" y="602.6">65</text><text x="591.1" y="602.3">99</text><text x="594.1" y="602.5">81</text><text x="597.0" y="602.5">80</text><text x="599.9" y="602.5">78</text><text x="602.8" y="602.0">140</text><text x="605.8" y="602.4">90</text><text x="608.7" y="602.3">103</text><text x="611.6" y="602.1">120</text><text x="614.5" y="601.8">168</text><text x="617.5" y="602.3">97</text><text x="620.4" y="602.0">136</text><text x="623.3" y="601.9">151</text><text x="626.2" y="601.3">221</text><text x="629.2" y="601.3">221</text><text x="632.1" y="601.2">233</text><text x="635.0" y="601.7">170</text><text x="637.9" y="601.6">192</text><text x="640.9" y="601.6">190</text><text x="643.8" y="601.0">261</text><text x="646.7" y="600.9">277</text><text x="649.6" y="601.7">175</text><text x="652.6" y="601.6">182</text><text x="655.5" y="601.6">192</text><text x="658.4" y="601.5">195</text><text x="661.3" y="601.2">232</text><text x="664.3" y="601.1">249</text><text x="667.2" y="601.5">204</text><text x="670.1" y="601.8">168</text><text x="673.0" y="601.3">228</text><text x="676.0" y="601.3">221</text><text x="678.9" y="601.1">248</text><text x="681.8" y="600.7">302</text><text x="684.7" y="601.0">263</text><text x="687.7" y="601.2">235</text><text x="690.6" y="601.1">247</text><text x="693.5" y="601.1">251</text><text x="696.4" y="601.8">163</text><text x="699.4" y="600.9">272</text><text x="702.3" y="601.1">251</text><text x="705.2" y="601.0">257</text><text x="708.1" y="601.2">241</text><text x="711.1" y="601.6">186</text><text x="714.0" y="601.6">182</text><text x="716.9" y="602.0">137</text><text x="719.8" y="601.5">205</text><text x="722.8" y="602.1">129</text><text x="725.7" y="602.1">128</text><text x="728.6" y="601.9">145</text><text x="731.5" y="602.0">137</text><text x="734.5" y="601.8">158</text><text x="737.4" y="602.1">121</text><text x="740.3" y="602.2">113</text><text x="743.2" y="602.1">130</text><text x="746.2" y="602.1">123</text><text x="749.1" y="601.9">152</text><text x="752.0" y="602.2">111</text><text x="754.9" y="601.4">208</text><text x="757.9" y="601.7">175</text><text x="760.8" y="602.1">121</text><text x="763.7" y="602.1">131</text><text x="766.6" y="602.0">140</text><text x="769.6" y="602.0">140</text><text x="772.5" y="602.2">112</text><text x="775.4" y="601.6">188</text><text x="778.3" y="601.5">200</text><text x="781.3" y="602.0">143</text><text x="784.2" y="602.0">143</text><text x="787.1" y="602.3">101</text><text x="790.0" y="602.3">102</text><text x="793.0" y="602.1">124</text><text x="795.9" y="602.2">115</text><text x="798.8" y="601.8">167</text><text x="801.7" y="602.3">102</text><text x="804.7" y="602.4">87</text><text x="807.6" y="601.8">163</text><text x="810.5" y="602.1">124</text><text x="813.4" y="602.4">88</text><text x="816.4" y="602.1">130</text><text x="819.3" y="602.5">79</text><text x="822.2" y="602.0">132</text><text x="825.1" y="601.6">182</text><text x="828.1" y="601.7">172</text><text x="831.0" y="601.8">157</text><text x="833.9" y="602.2">111</text><text x="836.8" y="602.1">125</text><text x="839.8" y="602.3">104</text><text x="842.7" y="601.7">175</text><text x="845.6" y="601.9">149</text><text x="848.5" y="601.7">181</text><text x="851.5" y="602.1">129</text><text x="854.4" y="602.2">118</text><text x="857.3" y="601.6">192</text><text x="860.2" y="601.4">216</text><text x="863.2" y="601.5">202</text><text x="866.1" y="601.5">199</text><text x="869.0" y="601.5">203</text><text x="871.9" y="601.5">195</text><text x="874.9" y="602.1">129</text><text x="877.8" y="601.7">170</text><text x="880.7" y="601.9">150</text><text x="883.6" y="602.2">107</text><text x="886.6" y="602.2">108</text><text x="889.5" y="601.9">144</text><text x="892.4" y="602.0">143</text><text x="895.3" y="601.1">250</text><text x="898.3" y="601.5">200</text><text x="901.2" y="600.7">300</text><text x="904.1" y="601.9">150</text><text x="907.0" y="601.7">180</text><text x="910.0" y="600.5">330</text><text x="912.9" y="599.9">400</text><text x="915.8" y="598.7">550</text><text x="918.7" y="598.3">600</text><text x="921.7" y="597.9">650</text><text x="924.6" y="599.5">450</text><text x="927.5" y="600.3">350</text><text x="930.4" y="597.1">750</text><text x="933.4" y="596.3">850</text><text x="936.3" y="595.9">900</text><text x="939.2" y="596.7">800</text><text x="942.1" y="597.5">700</text><text x="945.1" y="599.1">500</text><text x="948.0" y="596.7">800</text><text x="950.9" y="593.5">1k</text><text x="953.8" y="592.7">1k</text><text x="956.8" y="591.5">1k</text><text x="959.7" y="591.1">2k</text><text x="962.6" y="591.5">1k</text><text x="965.5" y="595.1">1k</text><text x="968.5" y="592.7">1k</text><text x="971.4" y="583.9">2k</text><text x="974.3" y="583.1">2k</text><text x="977.2" y="581.5">3k</text><text x="980.2" y="582.3">3k</text><text x="983.1" y="586.3">2k</text><text x="986.0" y="593.5">1k</text><text x="988.9" y="591.1">2k</text><text x="991.9" y="589.5">2k</text><text x="994.8" y="570.8">4k</text><text x="997.7" y="570.7">4k</text></g>
<text x="313.7" y="625.7" font-size="10.6" fill="#b0b0b0" text-anchor="middle">M03</text>
<text x="403.5" y="625.7" font-size="10.6" fill="#b0b0b0" text-anchor="middle">M04</text>
<text x="491.6" y="625.7" font-size="10.6" fill="#b0b0b0" text-anchor="middle">M05</text>
<text x="580.7" y="625.7" font-size="10.6" fill="#b0b0b0" text-anchor="middle">M06</text>
<text x="669.8" y="625.7" font-size="10.6" fill="#b0b0b0" text-anchor="middle">M07</text>
<text x="760.9" y="625.7" font-size="10.6" fill="#b0b0b0" text-anchor="middle">M08</text>
<text x="850.5" y="625.7" font-size="10.6" fill="#b0b0b0" text-anchor="middle">M09</text>
<text x="939.6" y="625.7" font-size="10.6" fill="#b0b0b0" text-anchor="middle">M10</text>
</svg>

<!-- tabs -->
<div class="a" style="left:251px;top:639px;width:125px;height:28px;background:#222;border-left:1px solid #3a3a3a;border-right:1px solid #3a3a3a"></div>
<div class="a" style="left:251px;top:665px;width:125px;height:2px;background:#5b9bd5"></div>
<div class="t" style="left:264px;top:646.6px;font-size:12.8px;color:#d0d0d0">Заболели по дни</div>
<div class="a" style="left:381px;top:640px;width:162px;height:27px;background:#0a0a0a;border:1px solid #3a3a3a"></div>
<div class="t" style="left:393.6px;top:646.6px;font-size:12.6px;color:#d0d0d0">Заболели с натрупване</div>
<div class="a" style="left:548px;top:640px;width:159px;height:27px;background:#0a0a0a;border:1px solid #3a3a3a"></div>
<div class="t" style="left:560px;top:646.6px;font-size:12.9px;color:#d0d0d0">Карантинирани по дни</div>

<!-- right -->
<div class="a" style="left:1043px;top:56px;width:219px;height:80px;background:#002673;box-shadow:inset 0 0 0 1px rgba(140,140,150,0.35)"></div>
<div class="t" style="left:1091px;top:64.6px;font-size:28.8px;color:#fff">Мобилна</div>
<div class="t" style="left:1104.5px;top:97px;font-size:28.8px;letter-spacing:0.3px;color:#fff">версия</div>

<div class="pnl" style="left:1043px;top:146px;width:219px;height:523px"></div>
<div class="t" style="left:1049px;top:157.2px;font-size:14.5px;letter-spacing:0.1px;color:#cfcfcf">Брой карантинирани по</div>
<div class="t" style="left:1049px;top:177px;font-size:14.5px;color:#cfcfcf">области</div>
<svg class="a" style="left:1043px;top:146px" width="219" height="523" viewBox="1043 146 219 523">
<line x1="1148.2" y1="220.3" x2="1229.4" y2="220.3" stroke="#505050" stroke-width="1" stroke-dasharray="4 4"/>
<line x1="1148.2" y1="249.7" x2="1229.4" y2="249.7" stroke="#505050" stroke-width="1" stroke-dasharray="4 4"/>
<line x1="1148.2" y1="279.1" x2="1229.4" y2="279.1" stroke="#505050" stroke-width="1" stroke-dasharray="4 4"/>
<line x1="1148.2" y1="308.5" x2="1229.4" y2="308.5" stroke="#505050" stroke-width="1" stroke-dasharray="4 4"/>
<line x1="1148.2" y1="337.9" x2="1229.4" y2="337.9" stroke="#505050" stroke-width="1" stroke-dasharray="4 4"/>
<line x1="1148.2" y1="367.3" x2="1229.4" y2="367.3" stroke="#505050" stroke-width="1" stroke-dasharray="4 4"/>
<line x1="1148.2" y1="396.7" x2="1229.4" y2="396.7" stroke="#505050" stroke-width="1" stroke-dasharray="4 4"/>
<line x1="1148.2" y1="426.1" x2="1229.4" y2="426.1" stroke="#505050" stroke-width="1" stroke-dasharray="4 4"/>
<line x1="1148.2" y1="455.5" x2="1229.4" y2="455.5" stroke="#505050" stroke-width="1" stroke-dasharray="4 4"/>
<line x1="1148.2" y1="484.9" x2="1229.4" y2="484.9" stroke="#505050" stroke-width="1" stroke-dasharray="4 4"/>
<line x1="1148.2" y1="514.3" x2="1229.4" y2="514.3" stroke="#505050" stroke-width="1" stroke-dasharray="4 4"/>
<line x1="1148.2" y1="543.7" x2="1229.4" y2="543.7" stroke="#505050" stroke-width="1" stroke-dasharray="4 4"/>
<line x1="1148.2" y1="573.1" x2="1229.4" y2="573.1" stroke="#505050" stroke-width="1" stroke-dasharray="4 4"/>
<line x1="1148.2" y1="602.5" x2="1229.4" y2="602.5" stroke="#505050" stroke-width="1" stroke-dasharray="4 4"/>
<line x1="1229.4" y1="220" x2="1229.4" y2="631" stroke="#505050" stroke-width="1" stroke-dasharray="4 4"/>
<rect x="1148.2" y="221.0" width="52.0" height="13.0" fill="#ffaa00"/>
<text x="1202.2" y="232.1" font-size="11" fill="#bdbdbd">62.6k</text>
<rect x="1148.2" y="235.7" width="25.2" height="13.0" fill="#ffaa00"/>
<text x="1175.4" y="246.8" font-size="11" fill="#bdbdbd">29.6k</text>
<rect x="1148.2" y="250.4" width="18.6" height="13.0" fill="#ffaa00"/>
<text x="1168.8" y="261.5" font-size="11" fill="#bdbdbd">21.4k</text>
<rect x="1148.2" y="265.1" width="18.6" height="13.0" fill="#ffaa00"/>
<text x="1168.8" y="276.2" font-size="11" fill="#bdbdbd">21.4k</text>
<rect x="1148.2" y="279.8" width="17.5" height="13.0" fill="#ffaa00"/>
<text x="1167.7" y="290.9" font-size="11" fill="#bdbdbd">20.1k</text>
<rect x="1148.2" y="294.5" width="16.3" height="13.0" fill="#ffaa00"/>
<text x="1166.5" y="305.6" font-size="11" fill="#bdbdbd">18.6k</text>
<rect x="1148.2" y="309.2" width="13.9" height="13.0" fill="#ffaa00"/>
<text x="1164.1" y="320.3" font-size="11" fill="#bdbdbd">15.6k</text>
<rect x="1148.2" y="323.9" width="13.6" height="13.0" fill="#ffaa00"/>
<text x="1163.8" y="335.0" font-size="11" fill="#bdbdbd">15.3k</text>
<rect x="1148.2" y="338.6" width="11.6" height="13.0" fill="#ffaa00"/>
<text x="1161.8" y="349.7" font-size="11" fill="#bdbdbd">12.8k</text>
<rect x="1148.2" y="353.3" width="10.9" height="13.0" fill="#ffaa00"/>
<text x="1161.1" y="364.4" font-size="11" fill="#bdbdbd">11.9k</text>
<rect x="1148.2" y="368.0" width="10.0" height="13.0" fill="#ffaa00"/>
<text x="1160.2" y="379.1" font-size="11" fill="#bdbdbd">10.8k</text>
<rect x="1148.2" y="382.7" width="9.9" height="13.0" fill="#ffaa00"/>
<text x="1160.1" y="393.8" font-size="11" fill="#bdbdbd">10.7k</text>
<rect x="1148.2" y="397.4" width="9.8" height="13.0" fill="#ffaa00"/>
<text x="1160.0" y="408.5" font-size="11" fill="#bdbdbd">10.6k</text>
<rect x="1148.2" y="412.1" width="8.6" height="13.0" fill="#ffaa00"/>
<text x="1158.8" y="423.2" font-size="11" fill="#bdbdbd">9.1k</text>
<rect x="1148.2" y="426.8" width="8.4" height="13.0" fill="#ffaa00"/>
<text x="1158.6" y="437.9" font-size="11" fill="#bdbdbd">8.9k</text>
<rect x="1148.2" y="441.5" width="8.3" height="13.0" fill="#ffaa00"/>
<text x="1158.5" y="452.6" font-size="11" fill="#bdbdbd">8.7k</text>
<rect x="1148.2" y="456.2" width="8.1" height="13.0" fill="#ffaa00"/>
<text x="1158.3" y="467.3" font-size="11" fill="#bdbdbd">8.5k</text>
<rect x="1148.2" y="470.9" width="7.1" height="13.0" fill="#ffaa00"/>
<text x="1157.3" y="482.0" font-size="11" fill="#bdbdbd">7.3k</text>
<rect x="1148.2" y="485.6" width="6.9" height="13.0" fill="#ffaa00"/>
<text x="1157.1" y="496.7" font-size="11" fill="#bdbdbd">7k</text>
<rect x="1148.2" y="500.3" width="6.8" height="13.0" fill="#ffaa00"/>
<text x="1157.0" y="511.4" font-size="11" fill="#bdbdbd">6.9k</text>
<rect x="1148.2" y="515.0" width="6.6" height="13.0" fill="#ffaa00"/>
<text x="1156.8" y="526.1" font-size="11" fill="#bdbdbd">6.7k</text>
<rect x="1148.2" y="529.7" width="6.6" height="13.0" fill="#ffaa00"/>
<text x="1156.8" y="540.8" font-size="11" fill="#bdbdbd">6.7k</text>
<rect x="1148.2" y="544.4" width="6.5" height="13.0" fill="#ffaa00"/>
<text x="1156.7" y="555.5" font-size="11" fill="#bdbdbd">6.5k</text>
<rect x="1148.2" y="559.1" width="5.9" height="13.0" fill="#ffaa00"/>
<text x="1156.1" y="570.2" font-size="11" fill="#bdbdbd">5.8k</text>
<rect x="1148.2" y="573.8" width="5.4" height="13.0" fill="#ffaa00"/>
<text x="1155.6" y="584.9" font-size="11" fill="#bdbdbd">5.2k</text>
<rect x="1148.2" y="588.5" width="5.3" height="13.0" fill="#ffaa00"/>
<text x="1155.5" y="599.6" font-size="11" fill="#bdbdbd">5k</text>
<rect x="1148.2" y="603.2" width="5.2" height="13.0" fill="#ffaa00"/>
<text x="1155.4" y="614.3" font-size="11" fill="#bdbdbd">4.9k</text>
<rect x="1148.2" y="617.9" width="4.9" height="13.0" fill="#ffaa00"/>
<text x="1155.1" y="629.0" font-size="11" fill="#bdbdbd">4.6k</text>
<line x1="1142.5" y1="227.5" x2="1148.2" y2="227.5" stroke="#8a8a8a" stroke-width="1"/>
<text x="1136" y="232.2" font-size="11.3" fill="#ababab" text-anchor="end">София-град</text>
<line x1="1142.5" y1="256.9" x2="1148.2" y2="256.9" stroke="#8a8a8a" stroke-width="1"/>
<text x="1136" y="261.6" font-size="11.3" fill="#ababab" text-anchor="end">Бургас</text>
<line x1="1142.5" y1="286.3" x2="1148.2" y2="286.3" stroke="#8a8a8a" stroke-width="1"/>
<text x="1136" y="291.0" font-size="11.3" fill="#ababab" text-anchor="end">Благоевград</text>
<line x1="1142.5" y1="315.7" x2="1148.2" y2="315.7" stroke="#8a8a8a" stroke-width="1"/>
<text x="1136" y="320.4" font-size="11.3" fill="#ababab" text-anchor="end">Пазарджик</text>
<line x1="1142.5" y1="345.1" x2="1148.2" y2="345.1" stroke="#8a8a8a" stroke-width="1"/>
<text x="1136" y="349.8" font-size="11.3" fill="#ababab" text-anchor="end">Хасково</text>
<line x1="1142.5" y1="374.5" x2="1148.2" y2="374.5" stroke="#8a8a8a" stroke-width="1"/>
<text x="1136" y="379.2" font-size="11.3" fill="#ababab" text-anchor="end">Плевен</text>
<line x1="1142.5" y1="403.9" x2="1148.2" y2="403.9" stroke="#8a8a8a" stroke-width="1"/>
<text x="1136" y="408.6" font-size="11.3" fill="#ababab" text-anchor="end">Русе</text>
<line x1="1142.5" y1="433.3" x2="1148.2" y2="433.3" stroke="#8a8a8a" stroke-width="1"/>
<text x="1136" y="438.0" font-size="11.3" fill="#ababab" text-anchor="end">София</text>
<line x1="1142.5" y1="462.7" x2="1148.2" y2="462.7" stroke="#8a8a8a" stroke-width="1"/>
<text x="1136" y="467.4" font-size="11.3" fill="#ababab" text-anchor="end">Разград</text>
<line x1="1142.5" y1="492.1" x2="1148.2" y2="492.1" stroke="#8a8a8a" stroke-width="1"/>
<text x="1136" y="496.8" font-size="11.3" fill="#ababab" text-anchor="end">Силистра</text>
<line x1="1142.5" y1="521.5" x2="1148.2" y2="521.5" stroke="#8a8a8a" stroke-width="1"/>
<text x="1136" y="526.2" font-size="11.3" fill="#ababab" text-anchor="end">Кюстендил</text>
<line x1="1142.5" y1="550.9" x2="1148.2" y2="550.9" stroke="#8a8a8a" stroke-width="1"/>
<text x="1136" y="555.6" font-size="11.3" fill="#ababab" text-anchor="end">Враца</text>
<line x1="1142.5" y1="580.3" x2="1148.2" y2="580.3" stroke="#8a8a8a" stroke-width="1"/>
<text x="1136" y="585.0" font-size="11.3" fill="#ababab" text-anchor="end">Габрово</text>
<line x1="1142.5" y1="609.7" x2="1148.2" y2="609.7" stroke="#8a8a8a" stroke-width="1"/>
<text x="1136" y="614.4" font-size="11.3" fill="#ababab" text-anchor="end">Видин</text>
<line x1="1148.2" y1="631.4" x2="1229.4" y2="631.4" stroke="#8a8a8a" stroke-width="1.2"/>
<line x1="1148.2" y1="631" x2="1148.2" y2="636.3" stroke="#8a8a8a" stroke-width="1"/>
<line x1="1229.4" y1="631" x2="1229.4" y2="636.3" stroke="#8a8a8a" stroke-width="1"/>
<text x="1148.2" y="654.8" font-size="11.3" fill="#ababab" text-anchor="middle">0</text>
<text x="1229.4" y="654.8" font-size="11.3" fill="#ababab" text-anchor="middle">100k</text>
</svg>
<svg class="a" style="left:0;top:0" width="1266" height="669" viewBox="0 0 1266 669" pointer-events="none">
<polygon points="267,475.5 267,487.5 260.5,481.5" fill="none" stroke="#c8c8c8" stroke-width="1.1"/>
<polygon points="1004.5,475.5 1004.5,487.5 1011,481.5" fill="none" stroke="#c8c8c8" stroke-width="1.1"/>
</svg>

</body></html>
